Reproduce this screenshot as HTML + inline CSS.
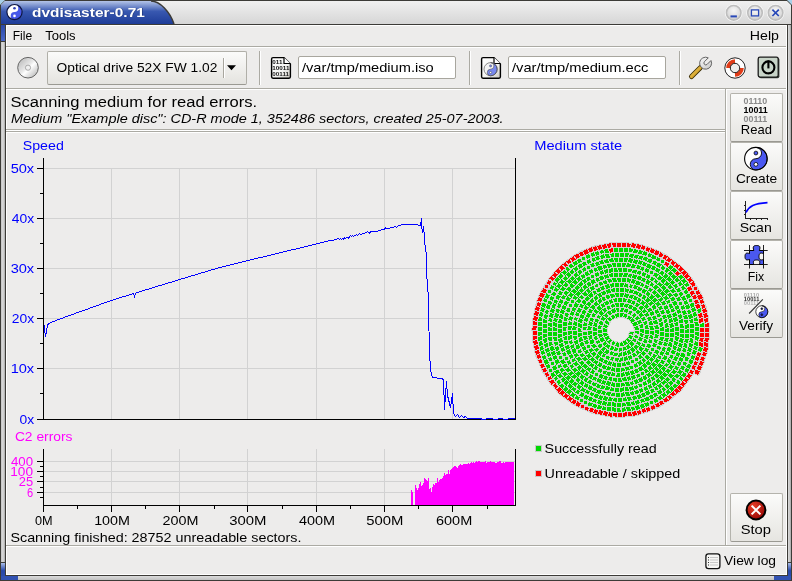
<!DOCTYPE html>
<html><head><meta charset="utf-8"><style>
*{margin:0;padding:0;box-sizing:border-box}
html,body{width:792px;height:581px;overflow:hidden;background:#a8d0e8}
body{font-family:"Liberation Sans",sans-serif;position:relative}
.a{position:absolute}
.t{position:absolute;white-space:nowrap;line-height:1}
.btn{position:absolute;border:1px solid #b0afa8;border-bottom-color:#9a9992;border-radius:2px;background:linear-gradient(180deg,#fbfbfa,#e4e3df)}
.sb{position:absolute;left:730px;width:53px;height:49px;border:1px solid #b4b3ac;border-bottom-color:#9a9992;border-radius:2px;background:linear-gradient(180deg,#fbfbfa,#e6e5e1)}
.sbl{position:absolute;left:0;width:51px;text-align:center;font-size:13px;line-height:1;color:#000}
</style></head><body>
<!-- window frame -->
<div class="a" style="left:0;top:0;width:792px;height:581px;background:#3c3b37;clip-path:polygon(5px 0,787px 0,792px 5px,792px 581px,0 581px,0 5px)"></div>
<div class="a" style="left:1px;top:25px;width:4px;height:555px;background:linear-gradient(90deg,#c4c4c4,#dcdcdc 50%,#a8a8a8)"></div>
<div class="a" style="left:788px;top:25px;width:3px;height:555px;background:linear-gradient(90deg,#dcdcdc,#c8c8c8 50%,#a8a8a8)"></div>
<div class="a" style="left:1px;top:576px;width:790px;height:4px;background:linear-gradient(180deg,#dcdcdc,#c0c0c0)"></div>
<div class="a" style="left:1px;top:25px;width:4px;height:16px;background:linear-gradient(180deg,#2a48a8,#4a68c8)"></div>
<div class="a" style="left:1px;top:41px;width:4px;height:1px;background:#3c3b37"></div>
<div class="a" style="left:1px;top:562px;width:4px;height:1px;background:#3c3b37"></div>
<div class="a" style="left:1px;top:563px;width:4px;height:17px;background:linear-gradient(180deg,#a8bce8,#2848a8 45%,#3050b0)"></div>
<div class="a" style="left:1px;top:576px;width:17px;height:4px;background:#3252b2"></div>
<div class="a" style="left:788px;top:562px;width:3px;height:1px;background:#3c3b37"></div>
<div class="a" style="left:788px;top:563px;width:3px;height:17px;background:linear-gradient(180deg,#a8bce8,#2848a8 45%,#3050b0)"></div>
<div class="a" style="left:774px;top:576px;width:17px;height:4px;background:#3252b2"></div>
<!-- title bar -->
<div class="a" style="left:1px;top:1px;width:790px;height:23px;background:linear-gradient(180deg,#f0f0f0,#d6d6d6);clip-path:polygon(4px 0,786px 0,790px 4px,790px 23px,0 23px,0 4px)"></div>
<svg class="a" style="left:0;top:0" width="200" height="25">
<defs><linearGradient id="tg" x1="0" y1="0" x2="0" y2="1"><stop offset="0" stop-color="#b4c4e8"/><stop offset="0.45" stop-color="#3858b0"/><stop offset="1" stop-color="#1e3c98"/></linearGradient>
<radialGradient id="yy"><stop offset="0" stop-color="#5060f0"/><stop offset="1" stop-color="#3040d8"/></radialGradient></defs>
<path d="M1,24 L1,5 L5,1 L151,1 C160,1 170,12 174,24 Z" fill="url(#tg)"/>
<path d="M151,1 C160,1 170,12 174,24" fill="none" stroke="#3c3b37" stroke-width="1.5"/>
<g transform="translate(14.5,12.1)">
<circle r="7.6" fill="#fff"/>
<path d="M0,-7.6 A7.6,7.6 0 0 1 0,7.6 A3.8,3.8 0 0 1 0,0 A3.8,3.8 0 0 0 0,-7.6Z" fill="#4658e8"/>
<circle r="7.6" fill="none" stroke="#0c1440" stroke-width="1.2"/>
<circle cy="-3.8" r="1.3" fill="#3040b0"/><circle cy="3.8" r="1.3" fill="#fff"/>
</g>
</svg>
<div class="a" style="left:1px;top:24px;width:790px;height:1px;background:#3c3b37"></div>
<!-- wm buttons -->
<svg class="a" style="left:720px;top:2px" width="70" height="22">
<defs><radialGradient id="wb" cx="0.5" cy="0.35" r="0.65"><stop offset="0" stop-color="#f6f6f6"/><stop offset="0.75" stop-color="#dadada"/><stop offset="1" stop-color="#c4c4c4"/></radialGradient></defs>
<g transform="translate(13.7,10.8)"><circle r="8.8" fill="#fafafa"/><circle r="7.3" fill="url(#wb)" stroke="#bdbdbd" stroke-width="1.6"/><rect x="-3.2" y="2.6" width="6.4" height="2" fill="#2848b8"/></g>
<g transform="translate(35,10.8)"><circle r="8.8" fill="#fafafa"/><circle r="7.3" fill="url(#wb)" stroke="#bdbdbd" stroke-width="1.6"/><rect x="-3.6" y="-2.9" width="7.2" height="6" fill="none" stroke="#2848b8" stroke-width="1.3"/></g>
<g transform="translate(55.6,10.8)"><circle r="8.8" fill="#fafafa"/><circle r="7.3" fill="url(#wb)" stroke="#bdbdbd" stroke-width="1.6"/><path d="M-3.2,-3.2L3.2,3.2M3.2,-3.2L-3.2,3.2" stroke="#2848b8" stroke-width="1.7"/></g>
</svg>
<!-- content -->
<div class="a" style="left:6px;top:25px;width:781px;height:550px;background:#edeceb;border:1px solid #fff"></div>
<!-- menu -->
<div class="a" style="left:6px;top:46px;width:780px;height:1px;background:#abaaa3"></div><div class="a" style="left:6px;top:47px;width:780px;height:1px;background:#fff"></div>
<div class="a" style="left:6px;top:88px;width:780px;height:1px;background:#abaaa3"></div><div class="a" style="left:6px;top:89px;width:780px;height:1px;background:#fff"></div>
<!-- toolbar -->
<svg class="a" style="left:16px;top:56px" width="24" height="24">
<defs><linearGradient id="cd" x1="0" y1="0" x2="1" y2="1"><stop offset="0" stop-color="#b0b0b0"/><stop offset="0.45" stop-color="#e8e8e8"/><stop offset="0.55" stop-color="#ffffff"/><stop offset="1" stop-color="#a8a8a8"/></linearGradient></defs>
<circle cx="12" cy="11.7" r="10.3" fill="url(#cd)" stroke="#666" stroke-width="1"/>
<circle cx="12" cy="11.7" r="2.6" fill="#f0f0f0" stroke="#999" stroke-width="0.8"/>
</svg>
<div class="btn" style="left:47px;top:51px;width:200px;height:34px"></div>
<div class="a" style="left:223px;top:58px;width:1px;height:20px;background:#a8a69e"></div><div class="a" style="left:224px;top:58px;width:1px;height:20px;background:#fff"></div>
<svg class="a" style="left:226px;top:64px" width="12" height="8"><path d="M1,1.2 L10,1.2 L5.5,6.2Z" fill="#000"/></svg>
<div class="a" style="left:259px;top:51px;width:1px;height:34px;background:#abaaa3"></div><div class="a" style="left:260px;top:51px;width:1px;height:34px;background:#fff"></div>
<svg class="a" style="left:0;top:0;will-change:transform" width="520" height="90">
<defs><linearGradient id="fg" x1="0" y1="0" x2="1" y2="1"><stop offset="0" stop-color="#ffffff"/><stop offset="0.6" stop-color="#f4f4f2"/><stop offset="1" stop-color="#c8c4bc"/></linearGradient></defs>
<path d="M273,57.6 L284,57.6 L290.4,64 L290.4,76.8 Q290.4,78.2 289,78.2 L273,78.2 Q271.6,78.2 271.6,76.8 L271.6,59 Q271.6,57.6 273,57.6Z" fill="url(#fg)" stroke="#000" stroke-width="1.4"/>
<path d="M284,57.6 L284,63.5 L290.4,63.5" fill="#fff" stroke="#000" stroke-width="1.2"/>
<text transform="translate(272.3,63.6) scale(1.05,1)" font-family="Liberation Sans" font-size="6" font-weight="bold" fill="#111">011</text>
<text transform="translate(272.3,70.1) scale(1.05,1)" font-family="Liberation Sans" font-size="6" font-weight="bold" fill="#111">10011</text>
<text transform="translate(272.3,76.4) scale(1.05,1)" font-family="Liberation Sans" font-size="6" font-weight="bold" fill="#222">00111</text>
<path d="M483,57.6 L494,57.6 L500.4,64 L500.4,76.8 Q500.4,78.2 499,78.2 L483,78.2 Q481.6,78.2 481.6,76.8 L481.6,59 Q481.6,57.6 483,57.6Z" fill="url(#fg)" stroke="#000" stroke-width="1.4"/>
<path d="M494,57.6 L494,63.5 L500.4,63.5" fill="#fff" stroke="#000" stroke-width="1.2"/>
<g transform="translate(490.6,69.2)">
<circle r="6.6" fill="#f4f4f4"/>
<path d="M0,-6.6 A6.6,6.6 0 0 1 0,6.6 A3.3,3.3 0 0 1 0,0 A3.3,3.3 0 0 0 0,-6.6Z" fill="#7888ee" stroke="#333" stroke-width="0.5"/>
<circle r="6.6" fill="none" stroke="#444" stroke-width="0.6"/>
<circle cy="-3.3" r="1.1" fill="#7888ee" stroke="#333" stroke-width="0.4"/><circle cy="3.3" r="1.1" fill="#f4f4f4" stroke="#333" stroke-width="0.4"/>
</g>
</svg>
<div class="a" style="left:298px;top:56px;width:158px;height:23px;background:#fff;border:1px solid #a8a69e;border-radius:2px"></div>
<div class="a" style="left:469px;top:51px;width:1px;height:34px;background:#abaaa3"></div><div class="a" style="left:470px;top:51px;width:1px;height:34px;background:#fff"></div>
<div class="a" style="left:508px;top:56px;width:158px;height:23px;background:#fff;border:1px solid #a8a69e;border-radius:2px"></div>
<div class="a" style="left:679px;top:51px;width:1px;height:34px;background:#abaaa3"></div><div class="a" style="left:680px;top:51px;width:1px;height:34px;background:#fff"></div>
<svg class="a" style="left:0;top:0" width="792" height="90">
<defs><linearGradient id="hd" x1="0" y1="0" x2="1" y2="1"><stop offset="0" stop-color="#f8f8f8"/><stop offset="1" stop-color="#c8c8c8"/></linearGradient>
<linearGradient id="hg" x1="0" y1="0" x2="1" y2="1"><stop offset="0" stop-color="#f0cc60"/><stop offset="1" stop-color="#c89010"/></linearGradient></defs>
<path d="M691.5,76.5 L700.3,67.7" stroke="#3a2c00" stroke-width="5" stroke-linecap="round"/>
<path d="M691.5,76.5 L700.3,67.7" stroke="url(#hg)" stroke-width="3.2" stroke-linecap="round"/>
<path d="M710.97,60.52 L707.16,64.33 A1.9,1.9 0 0 1 704.47,61.64 L708.28,57.83 A6.0,6.0 0 1 0 710.97,60.52 Z" fill="url(#hd)" stroke="#555" stroke-width="0.9"/>
<circle cx="735" cy="68" r="10.2" fill="#fff" stroke="#222" stroke-width="1"/>
<path d="M735,59.2 A8.8,8.8 0 0 0 726.2,68 L730.4,68 A4.6,4.6 0 0 1 735,63.4Z" fill="#e03c18"/>
<path d="M735,76.8 A8.8,8.8 0 0 0 743.8,68 L739.6,68 A4.6,4.6 0 0 1 735,72.6Z" fill="#e03c18"/>
<circle cx="735" cy="68" r="4.7" fill="#ededeb" stroke="#222" stroke-width="1"/>
<rect x="759" y="57.8" width="20.4" height="20.4" rx="1.8" fill="#384038"/>
<rect x="758.2" y="57.1" width="20" height="20" rx="1.8" fill="#c8d4c8" stroke="#1a1a1a" stroke-width="1.3"/>
<circle cx="768.4" cy="67.4" r="6" fill="none" stroke="#000" stroke-width="2.1"/>
<path d="M768.4,60.4 V68.4" stroke="#000" stroke-width="2.1"/>
</svg>
<!-- header -->
<div class="a" style="left:6px;top:129px;width:719px;height:1px;background:#abaaa3"></div><div class="a" style="left:6px;top:130px;width:719px;height:1px;background:#fff"></div>
<div class="a" style="left:6px;top:131px;width:719px;height:1px;background:#abaaa3"></div><div class="a" style="left:6px;top:132px;width:719px;height:1px;background:#fff"></div>
<div class="a" style="left:725px;top:89px;width:1px;height:456px;background:#abaaa3"></div><div class="a" style="left:726px;top:89px;width:1px;height:456px;background:#fff"></div>
<div class="a" style="left:6px;top:545px;width:780px;height:1px;background:#abaaa3"></div><div class="a" style="left:6px;top:546px;width:780px;height:1px;background:#fff"></div>
<!-- charts -->
<svg class="a" style="left:0;top:0" width="530" height="530"><rect x="44" y="368" width="471" height="1" fill="#d2d2d2"/><rect x="44" y="318" width="471" height="1" fill="#d2d2d2"/><rect x="44" y="268" width="471" height="1" fill="#d2d2d2"/><rect x="44" y="218" width="471" height="1" fill="#d2d2d2"/><rect x="44" y="168" width="471" height="1" fill="#d2d2d2"/><rect x="111" y="168" width="1" height="251" fill="#d2d2d2"/><rect x="179" y="168" width="1" height="251" fill="#d2d2d2"/><rect x="247" y="168" width="1" height="251" fill="#d2d2d2"/><rect x="316" y="168" width="1" height="251" fill="#d2d2d2"/><rect x="384" y="168" width="1" height="251" fill="#d2d2d2"/><rect x="452" y="168" width="1" height="251" fill="#d2d2d2"/><rect x="43" y="158" width="1" height="262" fill="#000"/><rect x="515" y="158" width="1" height="262" fill="#000"/><rect x="37" y="419" width="479" height="1" fill="#000"/><rect x="37" y="419" width="6" height="1" fill="#000"/><rect x="40" y="393" width="3" height="1" fill="#000"/><rect x="37" y="368" width="6" height="1" fill="#000"/><rect x="40" y="343" width="3" height="1" fill="#000"/><rect x="37" y="318" width="6" height="1" fill="#000"/><rect x="40" y="293" width="3" height="1" fill="#000"/><rect x="37" y="268" width="6" height="1" fill="#000"/><rect x="40" y="243" width="3" height="1" fill="#000"/><rect x="37" y="218" width="6" height="1" fill="#000"/><rect x="40" y="193" width="3" height="1" fill="#000"/><rect x="37" y="168" width="6" height="1" fill="#000"/><path d="M44.5 324.5 L44.5 329.5 L45.5 336.5 L46.5 331.5 L47.5 325.5 L48.5 323.5 L49.5 323.5 L50.5 322.5 L51.5 322.5 L52.5 321.5 L53.5 321.5 L54.5 321.5 L55.5 320.5 L56.5 320.5 L57.5 319.5 L58.5 319.5 L59.5 319.5 L60.5 318.5 L61.5 318.5 L62.5 318.5 L63.5 317.5 L64.5 317.5 L65.5 316.5 L66.5 316.5 L67.5 316.5 L68.5 315.5 L69.5 315.5 L70.5 315.5 L71.5 314.5 L72.5 314.5 L73.5 314.5 L74.5 313.5 L75.5 313.5 L76.5 312.5 L77.5 312.5 L78.5 312.5 L79.5 311.5 L80.5 311.5 L81.5 311.5 L82.5 310.5 L83.5 310.5 L84.5 310.5 L85.5 309.5 L86.5 309.5 L87.5 309.5 L88.5 308.5 L89.5 308.5 L90.5 307.5 L91.5 307.5 L92.5 307.5 L93.5 306.5 L94.5 306.5 L95.5 306.5 L96.5 305.5 L97.5 305.5 L98.5 305.5 L99.5 304.5 L100.5 304.5 L101.5 303.5 L102.5 303.5 L103.5 303.5 L104.5 302.5 L105.5 302.5 L106.5 302.5 L107.5 301.5 L108.5 301.5 L109.5 301.5 L110.5 300.5 L111.5 300.5 L112.5 300.5 L113.5 299.5 L114.5 299.5 L115.5 299.5 L116.5 298.5 L117.5 298.5 L118.5 298.5 L119.5 297.5 L120.5 297.5 L121.5 297.5 L122.5 296.5 L123.5 296.5 L124.5 296.5 L125.5 296.5 L126.5 295.5 L127.5 295.5 L128.5 295.5 L129.5 294.5 L130.5 294.5 L131.5 294.5 L132.5 293.5 L133.5 293.5 L134.5 296.5 L135.5 293.5 L136.5 292.5 L137.5 292.5 L138.5 292.5 L139.5 291.5 L140.5 291.5 L141.5 291.5 L142.5 290.5 L143.5 290.5 L144.5 290.5 L145.5 289.5 L146.5 289.5 L147.5 289.5 L148.5 289.5 L149.5 288.5 L150.5 288.5 L151.5 288.5 L152.5 287.5 L153.5 287.5 L154.5 287.5 L155.5 286.5 L156.5 286.5 L157.5 286.5 L158.5 285.5 L159.5 285.5 L160.5 285.5 L161.5 285.5 L162.5 284.5 L163.5 284.5 L164.5 284.5 L165.5 283.5 L166.5 283.5 L167.5 283.5 L168.5 282.5 L169.5 282.5 L170.5 282.5 L171.5 282.5 L172.5 281.5 L173.5 281.5 L174.5 281.5 L175.5 280.5 L176.5 280.5 L177.5 280.5 L178.5 279.5 L179.5 279.5 L180.5 279.5 L181.5 278.5 L182.5 278.5 L183.5 278.5 L184.5 278.5 L185.5 277.5 L186.5 277.5 L187.5 277.5 L188.5 276.5 L189.5 276.5 L190.5 276.5 L191.5 275.5 L192.5 275.5 L193.5 275.5 L194.5 275.5 L195.5 274.5 L196.5 274.5 L197.5 274.5 L198.5 273.5 L199.5 273.5 L200.5 273.5 L201.5 272.5 L202.5 272.5 L203.5 272.5 L204.5 272.5 L205.5 271.5 L206.5 271.5 L207.5 271.5 L208.5 270.5 L209.5 270.5 L210.5 270.5 L211.5 269.5 L212.5 269.5 L213.5 269.5 L214.5 269.5 L215.5 268.5 L216.5 268.5 L217.5 268.5 L218.5 267.5 L219.5 267.5 L220.5 267.5 L221.5 267.5 L222.5 266.5 L223.5 266.5 L224.5 266.5 L225.5 266.5 L226.5 265.5 L227.5 265.5 L228.5 265.5 L229.5 265.5 L230.5 264.5 L231.5 264.5 L232.5 264.5 L233.5 264.5 L234.5 263.5 L235.5 263.5 L236.5 263.5 L237.5 263.5 L238.5 262.5 L239.5 262.5 L240.5 262.5 L241.5 262.5 L242.5 261.5 L243.5 261.5 L244.5 261.5 L245.5 261.5 L246.5 260.5 L247.5 260.5 L248.5 260.5 L249.5 260.5 L250.5 259.5 L251.5 259.5 L252.5 259.5 L253.5 259.5 L254.5 258.5 L255.5 258.5 L256.5 258.5 L257.5 258.5 L258.5 257.5 L259.5 257.5 L260.5 257.5 L261.5 257.5 L262.5 257.5 L263.5 256.5 L264.5 256.5 L265.5 256.5 L266.5 256.5 L267.5 255.5 L268.5 255.5 L269.5 255.5 L270.5 255.5 L271.5 254.5 L272.5 254.5 L273.5 254.5 L274.5 254.5 L275.5 253.5 L276.5 253.5 L277.5 253.5 L278.5 253.5 L279.5 252.5 L280.5 252.5 L281.5 252.5 L282.5 252.5 L283.5 251.5 L284.5 251.5 L285.5 251.5 L286.5 251.5 L287.5 250.5 L288.5 250.5 L289.5 250.5 L290.5 250.5 L291.5 249.5 L292.5 249.5 L293.5 249.5 L294.5 249.5 L295.5 249.5 L296.5 248.5 L297.5 248.5 L298.5 248.5 L299.5 248.5 L300.5 247.5 L301.5 247.5 L302.5 247.5 L303.5 247.5 L304.5 246.5 L305.5 246.5 L306.5 246.5 L307.5 246.5 L308.5 245.5 L309.5 245.5 L310.5 245.5 L311.5 245.5 L312.5 244.5 L313.5 244.5 L314.5 244.5 L315.5 244.5 L316.5 243.5 L317.5 243.5 L318.5 243.5 L319.5 243.5 L320.5 242.5 L321.5 242.5 L322.5 242.5 L323.5 242.5 L324.5 241.5 L325.5 241.5 L326.5 241.5 L327.5 241.5 L328.5 240.5 L329.5 240.5 L330.5 240.5 L331.5 240.5 L332.5 240.5 L333.5 240.5 L334.5 239.5 L335.5 239.5 L336.5 239.5 L337.5 238.5 L338.5 238.5 L339.5 239.5 L340.5 238.5 L341.5 239.5 L342.5 238.5 L343.5 239.5 L344.5 237.5 L345.5 238.5 L346.5 237.5 L347.5 237.5 L348.5 238.5 L349.5 236.5 L350.5 235.5 L351.5 236.5 L352.5 235.5 L353.5 236.5 L354.5 235.5 L355.5 235.5 L356.5 234.5 L357.5 235.5 L358.5 234.5 L359.5 233.5 L360.5 234.5 L361.5 234.5 L362.5 233.5 L363.5 233.5 L364.5 233.5 L365.5 232.5 L366.5 232.5 L367.5 231.5 L368.5 232.5 L369.5 233.5 L370.5 231.5 L371.5 231.5 L372.5 231.5 L373.5 231.5 L374.5 231.5 L375.5 231.5 L376.5 231.5 L377.5 231.5 L378.5 230.5 L379.5 230.5 L380.5 230.5 L381.5 229.5 L382.5 229.5 L383.5 229.5 L384.5 229.5 L385.5 227.5 L386.5 228.5 L387.5 228.5 L388.5 228.5 L389.5 228.5 L390.5 227.5 L391.5 227.5 L392.5 227.5 L393.5 227.5 L394.5 226.5 L395.5 226.5 L396.5 227.5 L397.5 226.5 L398.5 225.5 L399.5 225.5 L400.5 225.5 L401.5 224.5 L402.5 224.5 L403.5 224.5 L404.5 224.5 L405.5 224.5 L406.5 224.5 L407.5 224.5 L408.5 224.5 L409.5 224.5 L410.5 224.5 L411.5 224.5 L412.5 224.5 L413.5 224.5 L414.5 224.5 L415.5 224.5 L416.5 224.5 L417.5 224.5 L418.5 225.5 L419.5 225.5 L420.5 225.5 L421.5 218.5 L421.5 224.5 L422.5 232.5 L423.5 226.5 L424.5 236.5 L424.5 241.5 L425.5 247.5 L426.5 256.5 L426.5 270.5 L427.5 286.5 L428.5 296.5 L428.5 310.5 L429.5 351.5 L430.5 370.5 L432.5 377.5 L441.5 378.5 L443.5 379.5 L444.5 409.5 L446.5 381.5 L447.5 395.5 L450.5 407.5 L452.5 393.5 L453.5 413.5 L455.5 416.5 L457.5 414.5 L459.5 417.5 L461.5 415.5 L463.5 417.5 L465.5 416.5 L467.5 418.5 L480.5 418.5 L482.5 419.5 L490.5 418.5 L495.5 419.5 L500.5 418.5 L505.5 419.5 L510.5 418.5 L514.5 418.5" fill="none" stroke="#0000ff" stroke-width="1" shape-rendering="crispEdges"/><rect x="44" y="461" width="471" height="1" fill="#d2d2d2"/><rect x="44" y="471" width="471" height="1" fill="#d2d2d2"/><rect x="44" y="481" width="471" height="1" fill="#d2d2d2"/><rect x="44" y="492" width="471" height="1" fill="#d2d2d2"/><rect x="111" y="449" width="1" height="56" fill="#d2d2d2"/><rect x="179" y="449" width="1" height="56" fill="#d2d2d2"/><rect x="247" y="449" width="1" height="56" fill="#d2d2d2"/><rect x="316" y="449" width="1" height="56" fill="#d2d2d2"/><rect x="384" y="449" width="1" height="56" fill="#d2d2d2"/><rect x="452" y="449" width="1" height="56" fill="#d2d2d2"/><path d="M411 490H412V505H411ZM412 492H413V505H412ZM415 485H416V505H415ZM416 488H417V505H416ZM417 490H418V505H417ZM418 488H419V505H418ZM419 484H420V505H419ZM420 482H421V505H420ZM421 486H422V505H421ZM422 485H423V505H422ZM423 483H424V505H423ZM424 478H425V505H424ZM425 479H426V505H425ZM426 480H427V505H426ZM427 481H428V505H427ZM428 478H429V505H428ZM429 489H430V505H429ZM430 488H431V505H430ZM431 492H432V505H431ZM432 487H433V505H432ZM433 484H434V505H433ZM434 485H435V505H434ZM435 483H436V505H435ZM436 483H437V505H436ZM437 478H438V505H437ZM438 482H439V505H438ZM439 480H440V505H439ZM440 479H441V505H440ZM441 479H442V505H441ZM442 478H443V505H442ZM443 476H444V505H443ZM444 473H445V505H444ZM445 475H446V505H445ZM446 474H447V505H446ZM447 474H448V505H447ZM448 470H449V505H448ZM449 474H450V505H449ZM450 470H451V505H450ZM451 469H452V505H451ZM452 468H453V505H452ZM453 467H454V505H453ZM454 466H455V505H454ZM455 466H456V505H455ZM456 467H457V505H456ZM457 468H458V505H457ZM458 466H459V505H458ZM459 465H460V505H459ZM460 464H461V505H460ZM461 465H462V505H461ZM462 465H463V505H462ZM463 464H464V505H463ZM464 464H465V505H464ZM465 464H466V505H465ZM466 464H467V505H466ZM467 464H468V505H467ZM468 463H469V505H468ZM469 464H470V505H469ZM470 463H471V505H470ZM471 462H472V505H471ZM472 463H473V505H472ZM473 462H474V505H473ZM474 463H475V505H474ZM475 462H476V505H475ZM476 461H477V505H476ZM477 462H478V505H477ZM478 461H479V505H478ZM479 461H480V505H479ZM480 462H481V505H480ZM481 462H482V505H481ZM482 462H483V505H482ZM483 462H484V505H483ZM484 462H485V505H484ZM485 461H486V505H485ZM486 463H487V505H486ZM487 462H488V505H487ZM488 462H489V505H488ZM489 462H490V505H489ZM490 461H491V505H490ZM491 462H492V505H491ZM492 462H493V505H492ZM493 462H494V505H493ZM494 462H495V505H494ZM495 463H496V505H495ZM496 463H497V505H496ZM497 462H498V505H497ZM498 462H499V505H498ZM499 461H500V505H499ZM500 461H501V505H500ZM501 463H502V505H501ZM502 463H503V505H502ZM503 462H504V505H503ZM504 463H505V505H504ZM505 462H506V505H505ZM506 462H507V505H506ZM507 462H508V505H507ZM508 462H509V505H508ZM509 462H510V505H509ZM510 462H511V505H510ZM511 462H512V505H511ZM512 462H513V505H512ZM513 462H514V505H513Z" fill="#ff00ff"/><rect x="43" y="449" width="1" height="63" fill="#000"/><rect x="515" y="449" width="1" height="57" fill="#000"/><rect x="44" y="505" width="472" height="1" fill="#000"/><rect x="37" y="461" width="6" height="1" fill="#000"/><rect x="37" y="471" width="6" height="1" fill="#000"/><rect x="37" y="481" width="6" height="1" fill="#000"/><rect x="37" y="492" width="6" height="1" fill="#000"/><rect x="40" y="466" width="3" height="1" fill="#000"/><rect x="40" y="476" width="3" height="1" fill="#000"/><rect x="40" y="487" width="3" height="1" fill="#000"/><rect x="40" y="497" width="3" height="1" fill="#000"/><rect x="43" y="506" width="1" height="6" fill="#000"/><rect x="111" y="506" width="1" height="6" fill="#000"/><rect x="179" y="506" width="1" height="6" fill="#000"/><rect x="247" y="506" width="1" height="6" fill="#000"/><rect x="316" y="506" width="1" height="6" fill="#000"/><rect x="384" y="506" width="1" height="6" fill="#000"/><rect x="452" y="506" width="1" height="6" fill="#000"/><rect x="77" y="506" width="1" height="3" fill="#000"/><rect x="145" y="506" width="1" height="3" fill="#000"/><rect x="214" y="506" width="1" height="3" fill="#000"/><rect x="282" y="506" width="1" height="3" fill="#000"/><rect x="350" y="506" width="1" height="3" fill="#000"/><rect x="418" y="506" width="1" height="3" fill="#000"/><rect x="487" y="506" width="1" height="3" fill="#000"/></svg>
<svg class="a" style="left:520px;top:230px" width="200" height="200">
<path d="M109.5 101.5L114.5 101.5L113.5 105.5L108.5 104.5ZM109.5 104.5L113.5 105.5L111.5 110.5L107.5 107.5ZM107.5 107.5L111.5 110.5L108.5 113.5L105.5 109.5ZM105.5 109.5L108.5 113.5L104.5 116.5L102.5 111.5ZM102.5 111.5L104.5 116.5L99.5 117.5L99.5 112.5ZM99.5 112.5L99.5 117.5L94.5 116.5L96.5 111.5ZM95.5 111.5L94.5 116.5L90.5 114.5L92.5 110.5ZM92.5 110.5L89.5 114.5L86.5 111.5L90.5 108.5ZM90.5 108.5L86.5 111.5L83.5 107.5L88.5 105.5ZM88.5 105.5L83.5 107.5L82.5 102.5L87.5 102.5ZM87.5 102.5L82.5 102.5L82.5 97.5L87.5 98.5ZM87.5 98.5L82.5 97.5L83.5 93.5L88.5 95.5ZM88.5 95.5L83.5 92.5L86.5 88.5L90.5 92.5ZM89.5 92.5L86.5 88.5L89.5 85.5L92.5 89.5ZM92.5 89.5L89.5 85.5L94.5 83.5L95.5 88.5ZM95.5 88.5L94.5 83.5L99.5 82.5L99.5 87.5ZM99.5 87.5L99.5 82.5L104.5 82.5L102.5 87.5ZM102.5 87.5L104.5 82.5L108.5 84.5L106.5 88.5ZM106.5 88.5L108.5 84.5L112.5 87.5L109.5 90.5ZM109.5 90.5L112.5 87.5L116.5 90.5L111.5 93.5ZM111.5 93.5L116.5 90.5L118.5 95.5L113.5 96.5ZM113.5 96.5L118.5 95.5L119.5 100.5L114.5 100.5ZM114.5 100.5L119.5 100.5L119.5 104.5L114.5 103.5ZM114.5 104.5L119.5 105.5L117.5 109.5L113.5 107.5ZM113.5 107.5L117.5 109.5L115.5 113.5L111.5 110.5ZM111.5 110.5L115.5 114.5L111.5 117.5L108.5 113.5ZM108.5 113.5L111.5 117.5L107.5 120.5L105.5 115.5ZM105.5 115.5L107.5 120.5L102.5 121.5L102.5 116.5ZM102.5 116.5L102.5 121.5L98.5 122.5L98.5 117.5ZM98.5 117.5L97.5 122.5L93.5 121.5L94.5 116.5ZM94.5 116.5L93.5 121.5L88.5 119.5L91.5 115.5ZM91.5 115.5L88.5 119.5L84.5 116.5L87.5 113.5ZM87.5 113.5L84.5 116.5L81.5 113.5L85.5 110.5ZM85.5 110.5L81.5 113.5L78.5 108.5L83.5 106.5ZM83.5 106.5L78.5 108.5L77.5 103.5L82.5 103.5ZM82.5 103.5L77.5 103.5L77.5 99.5L82.5 99.5ZM81.5 99.5L77.5 99.5L77.5 94.5L82.5 95.5ZM82.5 95.5L77.5 94.5L79.5 89.5L84.5 92.5ZM84.5 91.5L79.5 89.5L82.5 85.5L86.5 88.5ZM86.5 88.5L82.5 85.5L86.5 82.5L89.5 86.5ZM88.5 86.5L86.5 81.5L90.5 79.5L92.5 84.5ZM92.5 84.5L90.5 79.5L95.5 77.5L96.5 82.5ZM96.5 82.5L95.5 77.5L99.5 77.5L99.5 82.5ZM99.5 82.5L100.5 77.5L104.5 77.5L103.5 82.5ZM103.5 82.5L104.5 77.5L109.5 79.5L107.5 83.5ZM107.5 83.5L109.5 79.5L113.5 81.5L110.5 85.5ZM111.5 85.5L114.5 81.5L117.5 84.5L113.5 88.5ZM114.5 88.5L117.5 84.5L120.5 88.5L116.5 91.5ZM116.5 91.5L120.5 88.5L122.5 93.5L118.5 94.5ZM118.5 94.5L123.5 93.5L124.5 98.5L119.5 98.5ZM119.5 98.5L124.5 98.5L124.5 103.5L119.5 102.5ZM119.5 102.5L124.5 103.5L123.5 107.5L118.5 106.5ZM118.5 106.5L123.5 107.5L121.5 112.5L117.5 110.5ZM117.5 110.5L122.5 112.5L119.5 116.5L115.5 113.5ZM115.5 113.5L119.5 116.5L116.5 120.5L112.5 116.5ZM112.5 116.5L116.5 120.5L112.5 123.5L109.5 119.5ZM109.5 119.5L112.5 123.5L107.5 125.5L106.5 120.5ZM106.5 120.5L107.5 125.5L102.5 126.5L102.5 121.5ZM102.5 121.5L102.5 126.5L97.5 127.5L98.5 122.5ZM98.5 122.5L97.5 127.5L92.5 126.5L94.5 121.5ZM94.5 121.5L92.5 126.5L88.5 124.5L90.5 120.5ZM90.5 120.5L88.5 125.5L83.5 122.5L86.5 118.5ZM86.5 118.5L83.5 122.5L80.5 119.5L83.5 115.5ZM83.5 116.5L79.5 119.5L76.5 115.5L81.5 112.5ZM80.5 112.5L76.5 115.5L74.5 111.5L79.5 109.5ZM78.5 109.5L74.5 111.5L72.5 106.5L77.5 105.5ZM77.5 105.5L72.5 106.5L72.5 101.5L77.5 101.5ZM77.5 101.5L72.5 101.5L72.5 96.5L77.5 97.5ZM77.5 97.5L72.5 96.5L73.5 91.5L78.5 93.5ZM78.5 93.5L73.5 91.5L75.5 87.5L79.5 89.5ZM79.5 89.5L75.5 87.5L78.5 83.5L81.5 86.5ZM81.5 86.5L77.5 83.5L81.5 79.5L84.5 83.5ZM84.5 83.5L81.5 79.5L85.5 76.5L87.5 80.5ZM87.5 80.5L85.5 76.5L89.5 74.5L91.5 79.5ZM91.5 78.5L89.5 74.5L94.5 72.5L95.5 77.5ZM95.5 77.5L94.5 72.5L99.5 72.5L99.5 77.5ZM99.5 77.5L99.5 72.5L104.5 72.5L103.5 77.5ZM103.5 77.5L104.5 72.5L109.5 73.5L107.5 78.5ZM107.5 78.5L109.5 73.5L113.5 75.5L111.5 80.5ZM111.5 80.5L113.5 75.5L118.5 78.5L114.5 82.5ZM114.5 82.5L118.5 78.5L121.5 81.5L117.5 85.5ZM117.5 85.5L121.5 81.5L124.5 85.5L120.5 88.5ZM120.5 88.5L124.5 85.5L126.5 90.5L122.5 91.5ZM122.5 91.5L127.5 90.5L128.5 94.5L123.5 95.5ZM123.5 95.5L128.5 94.5L129.5 99.5L124.5 99.5ZM124.5 99.5L129.5 99.5L129.5 104.5L124.5 104.5ZM124.5 104.5L129.5 104.5L128.5 109.5L123.5 108.5ZM123.5 108.5L128.5 109.5L126.5 114.5L122.5 112.5ZM122.5 112.5L126.5 114.5L124.5 118.5L120.5 115.5ZM120.5 115.5L124.5 118.5L121.5 122.5L117.5 118.5ZM117.5 119.5L121.5 122.5L117.5 125.5L114.5 121.5ZM114.5 121.5L117.5 125.5L113.5 128.5L111.5 124.5ZM111.5 124.5L113.5 128.5L108.5 130.5L107.5 125.5ZM107.5 125.5L108.5 130.5L103.5 131.5L103.5 126.5ZM103.5 126.5L103.5 131.5L98.5 132.5L99.5 127.5ZM99.5 127.5L98.5 132.5L94.5 131.5L94.5 126.5ZM94.5 126.5L93.5 131.5L89.5 130.5L90.5 125.5ZM90.5 126.5L89.5 130.5L84.5 128.5L86.5 124.5ZM86.5 124.5L84.5 128.5L80.5 126.5L83.5 122.5ZM83.5 122.5L80.5 126.5L76.5 122.5L80.5 119.5ZM80.5 119.5L76.5 123.5L73.5 119.5L77.5 116.5ZM77.5 116.5L73.5 119.5L70.5 115.5L75.5 112.5ZM75.5 112.5L70.5 115.5L68.5 110.5L73.5 108.5ZM73.5 108.5L68.5 110.5L67.5 105.5L72.5 104.5ZM72.5 104.5L67.5 105.5L67.5 100.5L72.5 100.5ZM71.5 100.5L66.5 100.5L67.5 95.5L72.5 96.5ZM72.5 96.5L67.5 95.5L68.5 90.5L73.5 92.5ZM73.5 92.5L68.5 90.5L70.5 86.5L74.5 88.5ZM74.5 88.5L70.5 86.5L72.5 81.5L76.5 84.5ZM76.5 84.5L72.5 81.5L75.5 78.5L79.5 81.5ZM79.5 81.5L75.5 77.5L79.5 74.5L82.5 78.5ZM82.5 78.5L79.5 74.5L83.5 71.5L85.5 76.5ZM85.5 76.5L83.5 71.5L88.5 69.5L89.5 74.5ZM89.5 74.5L88.5 69.5L92.5 68.5L93.5 73.5ZM93.5 72.5L92.5 68.5L97.5 67.5L97.5 72.5ZM97.5 72.5L97.5 67.5L102.5 67.5L102.5 72.5ZM102.5 72.5L102.5 67.5L107.5 68.5L106.5 73.5ZM106.5 72.5L107.5 68.5L112.5 69.5L110.5 74.5ZM110.5 74.5L112.5 69.5L116.5 71.5L114.5 75.5ZM114.5 75.5L116.5 71.5L120.5 74.5L117.5 78.5ZM117.5 78.5L121.5 74.5L124.5 77.5L121.5 81.5ZM121.5 81.5L124.5 77.5L127.5 81.5L123.5 84.5ZM123.5 84.5L127.5 81.5L130.5 85.5L126.5 87.5ZM126.5 87.5L130.5 85.5L132.5 90.5L127.5 91.5ZM127.5 91.5L132.5 90.5L133.5 95.5L128.5 95.5ZM128.5 95.5L133.5 95.5L134.5 100.5L129.5 100.5ZM129.5 100.5L134.5 100.5L134.5 105.5L129.5 104.5ZM129.5 104.5L134.5 105.5L133.5 109.5L128.5 108.5ZM128.5 108.5L133.5 110.5L131.5 114.5L127.5 112.5ZM127.5 112.5L132.5 114.5L129.5 119.5L125.5 116.5ZM125.5 116.5L129.5 119.5L127.5 123.5L123.5 120.5ZM123.5 120.5L127.5 123.5L123.5 127.5L120.5 123.5ZM120.5 123.5L123.5 127.5L119.5 130.5L117.5 126.5ZM117.5 126.5L119.5 130.5L115.5 132.5L113.5 128.5ZM113.5 128.5L115.5 132.5L111.5 134.5L109.5 130.5ZM109.5 130.5L111.5 135.5L106.5 136.5L105.5 131.5ZM105.5 131.5L106.5 136.5L101.5 137.5L101.5 132.5ZM101.5 132.5L101.5 137.5L96.5 137.5L96.5 132.5ZM96.5 132.5L96.5 137.5L91.5 136.5L92.5 131.5ZM92.5 131.5L91.5 136.5L86.5 135.5L88.5 130.5ZM88.5 130.5L86.5 135.5L82.5 133.5L84.5 128.5ZM84.5 128.5L82.5 133.5L77.5 130.5L80.5 126.5ZM80.5 126.5L77.5 130.5L74.5 127.5L77.5 123.5ZM77.5 123.5L73.5 127.5L70.5 123.5L74.5 120.5ZM74.5 120.5L70.5 123.5L67.5 119.5L72.5 117.5ZM71.5 117.5L67.5 119.5L65.5 115.5L69.5 113.5ZM69.5 113.5L65.5 115.5L63.5 110.5L68.5 109.5ZM68.5 109.5L63.5 110.5L62.5 105.5L67.5 105.5ZM67.5 105.5L62.5 105.5L62.5 101.5L67.5 101.5ZM66.5 100.5L61.5 100.5L62.5 96.5L67.5 96.5ZM67.5 96.5L62.5 96.5L63.5 91.5L68.5 92.5ZM67.5 92.5L63.5 91.5L64.5 86.5L69.5 88.5ZM69.5 88.5L64.5 86.5L66.5 81.5L71.5 84.5ZM71.5 84.5L66.5 81.5L69.5 77.5L73.5 80.5ZM73.5 80.5L69.5 77.5L72.5 73.5L76.5 77.5ZM76.5 77.5L72.5 73.5L76.5 70.5L79.5 74.5ZM79.5 74.5L76.5 70.5L80.5 67.5L83.5 72.5ZM83.5 72.5L80.5 67.5L85.5 65.5L86.5 70.5ZM86.5 70.5L84.5 65.5L89.5 63.5L90.5 68.5ZM90.5 68.5L89.5 63.5L94.5 62.5L95.5 67.5ZM95.5 67.5L94.5 62.5L99.5 62.5L99.5 67.5ZM99.5 67.5L99.5 62.5L104.5 62.5L103.5 67.5ZM103.5 67.5L104.5 62.5L109.5 63.5L108.5 68.5ZM108.5 68.5L109.5 63.5L114.5 64.5L112.5 69.5ZM112.5 69.5L114.5 64.5L118.5 66.5L116.5 71.5ZM116.5 71.5L118.5 66.5L122.5 69.5L119.5 73.5ZM119.5 73.5L122.5 69.5L126.5 72.5L123.5 76.5ZM123.5 76.5L126.5 72.5L130.5 76.5L126.5 79.5ZM126.5 79.5L130.5 76.5L133.5 80.5L128.5 82.5ZM128.5 82.5L133.5 80.5L135.5 84.5L130.5 86.5ZM131.5 86.5L135.5 84.5L137.5 89.5L132.5 90.5ZM132.5 90.5L137.5 89.5L138.5 94.5L133.5 95.5ZM133.5 94.5L138.5 94.5L139.5 99.5L134.5 99.5ZM134.5 99.5L139.5 99.5L139.5 104.5L134.5 103.5ZM134.5 103.5L139.5 104.5L138.5 108.5L133.5 108.5ZM133.5 108.5L138.5 109.5L137.5 113.5L132.5 112.5ZM132.5 112.5L137.5 113.5L135.5 118.5L131.5 116.5ZM131.5 116.5L135.5 118.5L133.5 122.5L129.5 120.5ZM129.5 120.5L133.5 122.5L130.5 126.5L126.5 123.5ZM126.5 123.5L130.5 127.5L127.5 130.5L123.5 126.5ZM123.5 127.5L127.5 130.5L123.5 133.5L120.5 129.5ZM120.5 129.5L123.5 133.5L119.5 136.5L116.5 132.5ZM116.5 132.5L119.5 136.5L114.5 138.5L112.5 134.5ZM112.5 134.5L114.5 138.5L110.5 140.5L108.5 135.5ZM108.5 135.5L110.5 140.5L105.5 141.5L104.5 136.5ZM104.5 136.5L105.5 141.5L100.5 142.5L100.5 137.5ZM100.5 137.5L100.5 142.5L95.5 142.5L95.5 137.5ZM95.5 137.5L95.5 142.5L90.5 141.5L91.5 136.5ZM91.5 136.5L90.5 141.5L85.5 140.5L87.5 135.5ZM87.5 135.5L85.5 140.5L80.5 138.5L83.5 133.5ZM83.5 133.5L80.5 138.5L76.5 135.5L79.5 131.5ZM79.5 131.5L76.5 135.5L72.5 132.5L75.5 129.5ZM75.5 129.5L72.5 132.5L68.5 129.5L72.5 126.5ZM72.5 126.5L68.5 129.5L65.5 125.5L69.5 122.5ZM69.5 122.5L65.5 125.5L62.5 121.5L67.5 119.5ZM67.5 119.5L62.5 121.5L60.5 117.5L65.5 115.5ZM65.5 115.5L60.5 117.5L58.5 112.5L63.5 111.5ZM63.5 111.5L58.5 112.5L57.5 107.5L62.5 106.5ZM62.5 106.5L57.5 107.5L57.5 102.5L62.5 102.5ZM62.5 102.5L57.5 102.5L57.5 97.5L62.5 98.5ZM62.5 98.5L57.5 97.5L57.5 92.5L62.5 93.5ZM62.5 93.5L57.5 92.5L58.5 87.5L63.5 89.5ZM63.5 89.5L58.5 87.5L60.5 83.5L65.5 85.5ZM65.5 85.5L60.5 83.5L62.5 78.5L67.5 81.5ZM67.5 81.5L62.5 78.5L65.5 74.5L69.5 77.5ZM69.5 77.5L65.5 74.5L68.5 70.5L72.5 74.5ZM72.5 74.5L68.5 70.5L72.5 67.5L75.5 71.5ZM75.5 71.5L72.5 67.5L76.5 64.5L79.5 68.5ZM79.5 68.5L76.5 64.5L80.5 61.5L82.5 66.5ZM82.5 66.5L80.5 61.5L85.5 59.5L86.5 64.5ZM86.5 64.5L85.5 59.5L90.5 58.5L91.5 63.5ZM91.5 63.5L90.5 58.5L95.5 57.5L95.5 62.5ZM95.5 62.5L95.5 57.5L99.5 57.5L99.5 62.5ZM99.5 62.5L99.5 57.5L104.5 57.5L104.5 62.5ZM104.5 62.5L104.5 57.5L109.5 58.5L108.5 63.5ZM108.5 63.5L109.5 58.5L114.5 59.5L112.5 64.5ZM112.5 64.5L114.5 59.5L119.5 61.5L117.5 66.5ZM117.5 66.5L119.5 61.5L123.5 64.5L120.5 68.5ZM120.5 68.5L123.5 63.5L127.5 66.5L124.5 70.5ZM124.5 70.5L127.5 66.5L131.5 70.5L127.5 73.5ZM127.5 73.5L131.5 70.5L134.5 73.5L130.5 77.5ZM130.5 76.5L134.5 73.5L137.5 78.5L133.5 80.5ZM133.5 80.5L137.5 78.5L140.5 82.5L135.5 84.5ZM135.5 84.5L140.5 82.5L141.5 87.5L137.5 88.5ZM137.5 88.5L141.5 86.5L143.5 91.5L138.5 92.5ZM138.5 92.5L143.5 91.5L144.5 96.5L139.5 97.5ZM139.5 97.5L144.5 96.5L144.5 101.5L139.5 101.5ZM139.5 101.5L144.5 101.5L144.5 106.5L139.5 106.5ZM139.5 106.5L144.5 106.5L143.5 111.5L138.5 110.5ZM138.5 110.5L143.5 111.5L141.5 116.5L137.5 114.5ZM137.5 114.5L142.5 116.5L140.5 120.5L135.5 118.5ZM135.5 118.5L140.5 121.5L137.5 125.5L133.5 122.5ZM133.5 122.5L137.5 125.5L134.5 129.5L131.5 126.5ZM131.5 126.5L134.5 129.5L131.5 133.5L128.5 129.5ZM128.5 129.5L131.5 133.5L128.5 136.5L124.5 132.5ZM124.5 132.5L128.5 136.5L124.5 139.5L121.5 135.5ZM121.5 135.5L124.5 139.5L119.5 142.5L117.5 137.5ZM117.5 137.5L119.5 142.5L115.5 144.5L113.5 139.5ZM113.5 139.5L115.5 144.5L110.5 145.5L109.5 140.5ZM109.5 140.5L110.5 145.5L105.5 146.5L104.5 141.5ZM104.5 141.5L105.5 146.5L100.5 147.5L100.5 142.5ZM100.5 142.5L100.5 147.5L95.5 147.5L96.5 142.5ZM95.5 142.5L95.5 147.5L90.5 146.5L91.5 141.5ZM91.5 141.5L90.5 146.5L85.5 145.5L87.5 140.5ZM87.5 140.5L85.5 145.5L81.5 143.5L83.5 139.5ZM83.5 139.5L81.5 143.5L76.5 141.5L79.5 137.5ZM78.5 137.5L76.5 141.5L72.5 138.5L75.5 134.5ZM75.5 134.5L72.5 138.5L68.5 135.5L71.5 132.5ZM71.5 132.5L68.5 135.5L64.5 132.5L68.5 129.5ZM68.5 129.5L64.5 132.5L61.5 128.5L65.5 125.5ZM65.5 125.5L61.5 128.5L58.5 124.5L63.5 121.5ZM63.5 122.5L58.5 124.5L56.5 120.5L61.5 118.5ZM60.5 118.5L56.5 120.5L54.5 115.5L59.5 113.5ZM59.5 113.5L54.5 115.5L53.5 110.5L58.5 109.5ZM58.5 109.5L53.5 110.5L52.5 105.5L57.5 105.5ZM57.5 105.5L52.5 105.5L52.5 100.5L57.5 100.5ZM56.5 100.5L51.5 100.5L52.5 95.5L57.5 96.5ZM57.5 96.5L52.5 95.5L53.5 90.5L57.5 91.5ZM57.5 91.5L52.5 90.5L54.5 86.5L58.5 87.5ZM58.5 87.5L54.5 85.5L55.5 81.5L60.5 83.5ZM60.5 83.5L55.5 81.5L58.5 76.5L62.5 79.5ZM62.5 79.5L58.5 76.5L60.5 72.5L64.5 75.5ZM64.5 75.5L60.5 72.5L63.5 68.5L67.5 72.5ZM67.5 72.5L63.5 68.5L67.5 65.5L70.5 68.5ZM70.5 68.5L67.5 65.5L71.5 61.5L74.5 66.5ZM74.5 65.5L71.5 61.5L75.5 59.5L77.5 63.5ZM77.5 63.5L75.5 59.5L79.5 56.5L81.5 61.5ZM81.5 61.5L79.5 56.5L84.5 55.5L85.5 59.5ZM85.5 59.5L84.5 54.5L89.5 53.5L90.5 58.5ZM90.5 58.5L89.5 53.5L94.5 52.5L94.5 57.5ZM94.5 57.5L94.5 52.5L99.5 52.5L99.5 57.5ZM99.5 57.5L99.5 52.5L104.5 52.5L103.5 57.5ZM103.5 57.5L104.5 52.5L108.5 53.5L108.5 58.5ZM108.5 57.5L109.5 53.5L113.5 54.5L112.5 59.5ZM112.5 58.5L113.5 54.5L118.5 55.5L116.5 60.5ZM116.5 60.5L118.5 55.5L123.5 57.5L120.5 62.5ZM120.5 62.5L123.5 57.5L127.5 60.5L124.5 64.5ZM124.5 64.5L127.5 60.5L131.5 63.5L128.5 67.5ZM128.5 67.5L131.5 63.5L135.5 66.5L131.5 70.5ZM131.5 70.5L135.5 66.5L138.5 70.5L134.5 73.5ZM134.5 73.5L138.5 70.5L141.5 74.5L137.5 77.5ZM137.5 77.5L141.5 74.5L143.5 78.5L139.5 81.5ZM139.5 81.5L143.5 78.5L145.5 83.5L141.5 85.5ZM141.5 85.5L145.5 83.5L147.5 88.5L142.5 89.5ZM142.5 89.5L147.5 88.5L148.5 92.5L143.5 93.5ZM143.5 93.5L148.5 92.5L149.5 97.5L144.5 98.5ZM144.5 98.5L149.5 97.5L149.5 102.5L144.5 102.5ZM144.5 102.5L149.5 102.5L149.5 107.5L144.5 107.5ZM144.5 107.5L149.5 107.5L148.5 112.5L143.5 111.5ZM143.5 111.5L148.5 112.5L146.5 117.5L142.5 115.5ZM142.5 115.5L146.5 117.5L145.5 122.5L140.5 120.5ZM140.5 120.5L145.5 122.5L142.5 126.5L138.5 124.5ZM138.5 124.5L142.5 126.5L140.5 130.5L136.5 127.5ZM136.5 127.5L140.5 130.5L137.5 134.5L133.5 131.5ZM133.5 131.5L137.5 134.5L133.5 138.5L130.5 134.5ZM130.5 134.5L133.5 138.5L129.5 141.5L126.5 137.5ZM126.5 137.5L129.5 141.5L125.5 144.5L123.5 140.5ZM123.5 140.5L125.5 144.5L121.5 146.5L119.5 142.5ZM119.5 142.5L121.5 146.5L116.5 148.5L115.5 144.5ZM115.5 144.5L116.5 148.5L111.5 150.5L110.5 145.5ZM110.5 145.5L111.5 150.5L107.5 151.5L106.5 146.5ZM106.5 146.5L107.5 151.5L102.5 152.5L101.5 147.5ZM101.5 147.5L102.5 152.5L97.5 152.5L97.5 147.5ZM97.5 147.5L97.5 152.5L92.5 151.5L92.5 146.5ZM92.5 146.5L92.5 151.5L87.5 150.5L88.5 146.5ZM88.5 146.5L87.5 150.5L82.5 149.5L84.5 144.5ZM84.5 144.5L82.5 149.5L77.5 147.5L79.5 143.5ZM79.5 143.5L77.5 147.5L73.5 145.5L75.5 141.5ZM75.5 141.5L73.5 145.5L69.5 142.5L72.5 138.5ZM72.5 138.5L69.5 142.5L65.5 139.5L68.5 136.5ZM68.5 136.5L65.5 139.5L61.5 136.5L65.5 132.5ZM65.5 132.5L61.5 136.5L58.5 132.5L62.5 129.5ZM62.5 129.5L58.5 132.5L55.5 128.5L59.5 125.5ZM59.5 125.5L55.5 128.5L52.5 124.5L57.5 122.5ZM57.5 122.5L52.5 124.5L50.5 119.5L55.5 117.5ZM55.5 117.5L50.5 119.5L49.5 114.5L54.5 113.5ZM53.5 113.5L49.5 115.5L48.5 110.5L52.5 109.5ZM52.5 109.5L47.5 110.5L47.5 105.5L52.5 104.5ZM52.5 104.5L47.5 105.5L47.5 100.5L52.5 100.5ZM51.5 100.5L46.5 100.5L47.5 95.5L52.5 95.5ZM52.5 95.5L47.5 95.5L48.5 90.5L52.5 91.5ZM52.5 91.5L47.5 90.5L49.5 85.5L53.5 86.5ZM53.5 86.5L49.5 85.5L50.5 80.5L55.5 82.5ZM55.5 82.5L50.5 80.5L52.5 76.5L57.5 78.5ZM57.5 78.5L52.5 76.5L55.5 71.5L59.5 74.5ZM59.5 74.5L55.5 71.5L58.5 67.5L62.5 70.5ZM62.5 70.5L58.5 67.5L61.5 64.5L65.5 67.5ZM65.5 67.5L61.5 63.5L65.5 60.5L68.5 64.5ZM68.5 64.5L65.5 60.5L68.5 57.5L71.5 61.5ZM71.5 61.5L68.5 57.5L73.5 54.5L75.5 59.5ZM75.5 58.5L73.5 54.5L77.5 52.5L79.5 56.5ZM79.5 56.5L77.5 52.5L82.5 50.5L83.5 55.5ZM83.5 55.5L82.5 50.5L86.5 49.5L88.5 53.5ZM88.5 53.5L86.5 48.5L91.5 47.5L92.5 52.5ZM92.5 52.5L91.5 47.5L96.5 47.5L97.5 52.5ZM97.5 52.5L96.5 47.5L101.5 47.5L101.5 52.5ZM101.5 52.5L101.5 47.5L106.5 47.5L106.5 52.5ZM106.5 52.5L106.5 47.5L111.5 48.5L110.5 53.5ZM110.5 53.5L111.5 48.5L116.5 49.5L114.5 54.5ZM114.5 54.5L116.5 49.5L121.5 51.5L119.5 56.5ZM119.5 56.5L121.5 51.5L125.5 53.5L123.5 58.5ZM123.5 57.5L125.5 53.5L129.5 56.5L127.5 60.5ZM127.5 60.5L129.5 56.5L133.5 59.5L130.5 63.5ZM130.5 62.5L134.5 59.5L137.5 62.5L134.5 65.5ZM134.5 65.5L137.5 62.5L141.5 66.5L137.5 69.5ZM137.5 69.5L141.5 66.5L144.5 69.5L140.5 72.5ZM140.5 72.5L144.5 69.5L146.5 74.5L142.5 76.5ZM142.5 76.5L147.5 74.5L149.5 78.5L144.5 80.5ZM144.5 80.5L149.5 78.5L151.5 83.5L146.5 84.5ZM146.5 84.5L151.5 83.5L152.5 87.5L147.5 89.5ZM147.5 89.5L152.5 87.5L153.5 92.5L148.5 93.5ZM148.5 93.5L153.5 92.5L154.5 97.5L149.5 98.5ZM149.5 98.5L154.5 97.5L154.5 102.5L149.5 102.5ZM149.5 102.5L154.5 102.5L154.5 107.5L149.5 107.5ZM149.5 107.5L154.5 107.5L153.5 112.5L148.5 111.5ZM148.5 111.5L153.5 112.5L152.5 117.5L147.5 116.5ZM147.5 116.5L152.5 117.5L150.5 122.5L145.5 120.5ZM145.5 120.5L150.5 122.5L148.5 126.5L144.5 124.5ZM144.5 124.5L148.5 126.5L145.5 131.5L141.5 128.5ZM141.5 128.5L146.5 131.5L143.5 135.5L139.5 132.5ZM139.5 132.5L143.5 135.5L139.5 139.5L136.5 135.5ZM136.5 135.5L139.5 139.5L136.5 142.5L133.5 138.5ZM133.5 138.5L136.5 142.5L132.5 145.5L129.5 141.5ZM129.5 141.5L132.5 145.5L128.5 148.5L125.5 144.5ZM125.5 144.5L128.5 148.5L124.5 151.5L121.5 146.5ZM121.5 146.5L124.5 151.5L119.5 153.5L117.5 148.5ZM117.5 148.5L119.5 153.5L114.5 154.5L113.5 149.5ZM113.5 150.5L114.5 154.5L110.5 156.5L109.5 151.5ZM109.5 151.5L110.5 156.5L105.5 156.5L104.5 151.5ZM104.5 151.5L105.5 156.5L100.5 157.5L100.5 152.5ZM100.5 152.5L100.5 157.5L95.5 157.5L95.5 152.5ZM95.5 152.5L95.5 157.5L90.5 156.5L91.5 151.5ZM91.5 151.5L90.5 156.5L85.5 155.5L86.5 150.5ZM86.5 150.5L85.5 155.5L80.5 154.5L82.5 149.5ZM82.5 149.5L80.5 154.5L75.5 152.5L77.5 147.5ZM77.5 147.5L75.5 152.5L71.5 150.5L73.5 145.5ZM73.5 145.5L71.5 150.5L67.5 147.5L70.5 143.5ZM69.5 143.5L67.5 147.5L63.5 144.5L66.5 140.5ZM66.5 140.5L63.5 144.5L59.5 141.5L62.5 137.5ZM62.5 137.5L59.5 141.5L55.5 137.5L59.5 134.5ZM59.5 134.5L55.5 137.5L52.5 133.5L56.5 130.5ZM56.5 130.5L52.5 133.5L50.5 129.5L54.5 127.5ZM54.5 127.5L50.5 129.5L47.5 125.5L52.5 123.5ZM52.5 123.5L47.5 125.5L45.5 120.5L50.5 118.5ZM50.5 118.5L45.5 120.5L44.5 115.5L49.5 114.5ZM48.5 114.5L44.5 115.5L43.5 110.5L48.5 110.5ZM47.5 110.5L43.5 110.5L42.5 106.5L47.5 105.5ZM47.5 105.5L42.5 106.5L42.5 101.5L47.5 101.5ZM47.5 101.5L42.5 101.5L42.5 96.5L47.5 96.5ZM47.5 96.5L42.5 96.5L42.5 91.5L47.5 91.5ZM47.5 91.5L42.5 91.5L43.5 86.5L48.5 87.5ZM48.5 87.5L43.5 86.5L45.5 81.5L49.5 83.5ZM49.5 83.5L45.5 81.5L47.5 76.5L51.5 78.5ZM51.5 78.5L46.5 76.5L49.5 72.5L53.5 74.5ZM53.5 74.5L49.5 72.5L51.5 68.5L55.5 70.5ZM55.5 70.5L51.5 68.5L54.5 64.5L58.5 67.5ZM58.5 67.5L54.5 64.5L58.5 60.5L61.5 63.5ZM61.5 63.5L58.5 60.5L61.5 56.5L64.5 60.5ZM64.5 60.5L61.5 56.5L65.5 53.5L68.5 57.5ZM68.5 57.5L65.5 53.5L69.5 50.5L72.5 55.5ZM72.5 55.5L69.5 50.5L74.5 48.5L76.5 53.5ZM76.5 52.5L74.5 48.5L78.5 46.5L80.5 51.5ZM80.5 51.5L78.5 46.5L83.5 44.5L84.5 49.5ZM84.5 49.5L83.5 44.5L88.5 43.5L89.5 48.5ZM89.5 48.5L88.5 43.5L93.5 42.5L93.5 47.5ZM93.5 47.5L93.5 42.5L98.5 42.5L98.5 47.5ZM98.5 47.5L98.5 42.5L103.5 42.5L102.5 47.5ZM102.5 47.5L103.5 42.5L108.5 42.5L107.5 47.5ZM107.5 47.5L108.5 42.5L112.5 43.5L111.5 48.5ZM111.5 48.5L112.5 43.5L117.5 44.5L116.5 49.5ZM116.5 49.5L117.5 44.5L122.5 46.5L120.5 51.5ZM120.5 51.5L122.5 46.5L126.5 48.5L124.5 53.5ZM124.5 53.5L127.5 48.5L131.5 51.5L128.5 55.5ZM128.5 55.5L131.5 51.5L135.5 53.5L132.5 57.5ZM132.5 57.5L135.5 53.5L139.5 57.5L135.5 60.5ZM136.5 60.5L139.5 57.5L142.5 60.5L139.5 63.5ZM139.5 63.5L142.5 60.5L146.5 64.5L142.5 67.5ZM142.5 67.5L146.5 64.5L149.5 68.5L145.5 71.5ZM145.5 71.5L149.5 68.5L151.5 72.5L147.5 74.5ZM147.5 74.5L151.5 72.5L154.5 77.5L149.5 79.5ZM149.5 79.5L154.5 77.5L155.5 81.5L151.5 83.5ZM151.5 83.5L156.5 81.5L157.5 86.5L152.5 87.5ZM152.5 87.5L157.5 86.5L158.5 91.5L153.5 92.5ZM153.5 92.5L158.5 91.5L159.5 96.5L154.5 96.5ZM154.5 96.5L159.5 96.5L159.5 101.5L154.5 101.5ZM154.5 101.5L159.5 101.5L159.5 106.5L154.5 105.5ZM154.5 105.5L159.5 106.5L158.5 111.5L153.5 110.5ZM153.5 110.5L158.5 111.5L157.5 116.5L152.5 114.5ZM152.5 114.5L157.5 116.5L156.5 120.5L151.5 119.5ZM151.5 119.5L156.5 120.5L154.5 125.5L149.5 123.5ZM150.5 123.5L154.5 125.5L152.5 130.5L148.5 127.5ZM148.5 127.5L152.5 130.5L149.5 134.5L145.5 131.5ZM145.5 131.5L149.5 134.5L146.5 138.5L143.5 135.5ZM143.5 135.5L147.5 138.5L143.5 142.5L140.5 138.5ZM140.5 138.5L143.5 142.5L140.5 145.5L136.5 142.5ZM136.5 142.5L140.5 145.5L136.5 149.5L133.5 145.5ZM133.5 145.5L136.5 149.5L132.5 151.5L129.5 147.5ZM129.5 147.5L132.5 152.5L128.5 154.5L125.5 150.5ZM125.5 150.5L128.5 154.5L123.5 156.5L121.5 152.5ZM121.5 152.5L123.5 156.5L119.5 158.5L117.5 153.5ZM117.5 154.5L119.5 158.5L114.5 160.5L113.5 155.5ZM113.5 155.5L114.5 160.5L109.5 161.5L108.5 156.5ZM108.5 156.5L109.5 161.5L104.5 161.5L104.5 156.5ZM104.5 156.5L104.5 161.5L99.5 162.5L99.5 157.5ZM99.5 157.5L99.5 162.5L94.5 162.5L94.5 157.5ZM94.5 157.5L94.5 162.5L89.5 161.5L90.5 156.5ZM90.5 156.5L89.5 161.5L84.5 160.5L85.5 155.5ZM85.5 155.5L84.5 160.5L79.5 159.5L81.5 154.5ZM81.5 154.5L79.5 159.5L75.5 157.5L77.5 152.5ZM77.5 152.5L75.5 157.5L70.5 155.5L73.5 150.5ZM72.5 151.5L70.5 155.5L66.5 152.5L69.5 148.5ZM68.5 148.5L66.5 153.5L62.5 150.5L65.5 146.5ZM65.5 146.5L62.5 150.5L58.5 147.5L61.5 143.5ZM61.5 143.5L58.5 147.5L54.5 143.5L58.5 140.5ZM58.5 140.5L54.5 143.5L51.5 139.5L55.5 136.5ZM55.5 136.5L51.5 139.5L48.5 135.5L52.5 133.5ZM52.5 133.5L48.5 135.5L45.5 131.5L49.5 129.5ZM49.5 129.5L45.5 131.5L43.5 127.5L47.5 125.5ZM47.5 125.5L43.5 127.5L41.5 122.5L45.5 121.5ZM45.5 121.5L41.5 122.5L39.5 118.5L44.5 116.5ZM44.5 116.5L39.5 118.5L38.5 113.5L43.5 112.5ZM43.5 112.5L38.5 113.5L37.5 108.5L42.5 107.5ZM42.5 107.5L37.5 108.5L37.5 103.5L42.5 103.5ZM42.5 103.5L37.5 103.5L37.5 98.5L42.5 98.5ZM42.5 98.5L37.5 98.5L37.5 93.5L42.5 93.5ZM42.5 93.5L37.5 93.5L38.5 88.5L43.5 89.5ZM43.5 89.5L38.5 88.5L39.5 83.5L44.5 84.5ZM44.5 84.5L39.5 83.5L40.5 78.5L45.5 80.5ZM45.5 80.5L40.5 78.5L42.5 74.5L47.5 76.5ZM47.5 76.5L42.5 74.5L44.5 69.5L49.5 72.5ZM49.5 72.5L44.5 69.5L47.5 65.5L51.5 68.5ZM51.5 68.5L47.5 65.5L50.5 61.5L54.5 64.5ZM54.5 64.5L50.5 61.5L53.5 57.5L57.5 61.5ZM57.5 61.5L53.5 57.5L57.5 54.5L60.5 57.5ZM60.5 57.5L57.5 54.5L61.5 50.5L64.5 54.5ZM64.5 54.5L61.5 50.5L65.5 47.5L67.5 52.5ZM67.5 52.5L65.5 47.5L69.5 45.5L71.5 49.5ZM71.5 49.5L69.5 45.5L73.5 43.5L75.5 47.5ZM75.5 47.5L73.5 43.5L78.5 41.5L80.5 45.5ZM80.5 45.5L78.5 41.5L83.5 39.5L84.5 44.5ZM84.5 44.5L83.5 39.5L88.5 38.5L88.5 43.5ZM88.5 43.5L88.5 38.5L93.5 37.5L93.5 42.5ZM93.5 42.5L93.5 37.5L97.5 37.5L98.5 42.5ZM98.5 42.5L97.5 37.5L102.5 37.5L102.5 42.5ZM102.5 42.5L102.5 37.5L107.5 37.5L107.5 42.5ZM107.5 42.5L107.5 37.5L112.5 38.5L111.5 43.5ZM111.5 43.5L112.5 38.5L117.5 39.5L116.5 44.5ZM116.5 44.5L117.5 39.5L122.5 41.5L120.5 45.5ZM120.5 45.5L122.5 41.5L127.5 43.5L124.5 47.5ZM124.5 47.5L127.5 43.5L131.5 45.5L129.5 49.5ZM129.5 49.5L131.5 45.5L135.5 48.5L132.5 52.5ZM132.5 52.5L135.5 48.5L139.5 51.5L136.5 54.5ZM136.5 54.5L139.5 50.5L143.5 54.5L140.5 57.5ZM140.5 57.5L143.5 54.5L147.5 57.5L143.5 61.5ZM143.5 61.5L147.5 57.5L150.5 61.5L146.5 64.5ZM146.5 64.5L150.5 61.5L153.5 65.5L149.5 68.5ZM149.5 68.5L153.5 65.5L156.5 69.5L151.5 72.5ZM151.5 72.5L156.5 69.5L158.5 74.5L153.5 76.5ZM153.5 76.5L158.5 74.5L160.5 78.5L155.5 80.5ZM155.5 80.5L160.5 78.5L161.5 83.5L157.5 84.5ZM157.5 84.5L161.5 83.5L163.5 88.5L158.5 89.5ZM158.5 89.5L163.5 88.5L163.5 93.5L158.5 93.5ZM158.5 93.5L163.5 93.5L164.5 98.5L159.5 98.5ZM159.5 98.5L164.5 98.5L164.5 103.5L159.5 103.5ZM159.5 103.5L164.5 103.5L164.5 108.5L159.5 107.5ZM159.5 107.5L164.5 108.5L163.5 113.5L158.5 112.5ZM158.5 112.5L163.5 113.5L162.5 118.5L157.5 116.5ZM157.5 116.5L162.5 118.5L160.5 122.5L156.5 121.5ZM156.5 121.5L160.5 122.5L159.5 127.5L154.5 125.5ZM154.5 125.5L159.5 127.5L156.5 132.5L152.5 129.5ZM152.5 129.5L157.5 132.5L154.5 136.5L150.5 133.5ZM150.5 133.5L154.5 136.5L151.5 140.5L147.5 137.5ZM147.5 137.5L151.5 140.5L148.5 144.5L144.5 141.5ZM144.5 141.5L148.5 144.5L145.5 148.5L141.5 144.5ZM141.5 144.5L145.5 148.5L141.5 151.5L138.5 147.5ZM138.5 147.5L141.5 151.5L137.5 154.5L134.5 150.5ZM134.5 150.5L137.5 154.5L133.5 157.5L130.5 153.5ZM130.5 153.5L133.5 157.5L129.5 159.5L126.5 155.5ZM126.5 155.5L129.5 159.5L124.5 161.5L122.5 157.5ZM122.5 157.5L124.5 161.5L119.5 163.5L118.5 158.5ZM118.5 158.5L119.5 163.5L115.5 165.5L113.5 160.5ZM113.5 160.5L115.5 165.5L110.5 166.5L109.5 161.5ZM109.5 161.5L110.5 166.5L105.5 166.5L104.5 161.5ZM104.5 161.5L105.5 166.5L100.5 167.5L100.5 162.5ZM100.5 162.5L100.5 167.5L95.5 167.5L95.5 162.5ZM95.5 162.5L95.5 167.5L90.5 166.5L91.5 161.5ZM91.5 161.5L90.5 166.5L85.5 165.5L86.5 160.5ZM86.5 161.5L85.5 165.5L80.5 164.5L82.5 159.5ZM82.5 159.5L80.5 164.5L75.5 163.5L77.5 158.5ZM77.5 158.5L75.5 163.5L71.5 161.5L73.5 156.5ZM73.5 156.5L71.5 161.5L66.5 159.5L69.5 154.5ZM69.5 154.5L66.5 159.5L62.5 156.5L65.5 152.5ZM65.5 152.5L62.5 156.5L58.5 153.5L61.5 149.5ZM61.5 149.5L58.5 153.5L54.5 150.5L57.5 146.5ZM57.5 146.5L54.5 150.5L50.5 146.5L54.5 143.5ZM54.5 143.5L50.5 146.5L47.5 143.5L51.5 140.5ZM51.5 140.5L47.5 143.5L44.5 139.5L48.5 136.5ZM48.5 136.5L44.5 139.5L41.5 135.5L46.5 132.5ZM46.5 132.5L41.5 135.5L39.5 130.5L43.5 128.5ZM43.5 128.5L39.5 130.5L37.5 126.5L41.5 124.5ZM41.5 124.5L37.5 126.5L35.5 121.5L40.5 120.5ZM40.5 120.5L35.5 121.5L34.5 116.5L38.5 115.5ZM38.5 115.5L34.5 116.5L33.5 111.5L38.5 111.5ZM37.5 111.5L33.5 111.5L32.5 106.5L37.5 106.5ZM37.5 106.5L32.5 106.5L32.5 101.5L37.5 101.5ZM37.5 101.5L32.5 101.5L32.5 96.5L37.5 97.5ZM37.5 97.5L32.5 96.5L32.5 91.5L37.5 92.5ZM37.5 92.5L32.5 91.5L33.5 87.5L38.5 88.5ZM38.5 88.5L33.5 87.5L34.5 82.5L39.5 83.5ZM39.5 83.5L34.5 82.5L36.5 77.5L40.5 79.5ZM40.5 79.5L35.5 77.5L37.5 72.5L42.5 74.5ZM42.5 74.5L37.5 72.5L40.5 68.5L44.5 70.5ZM44.5 70.5L40.5 68.5L42.5 63.5L46.5 66.5ZM46.5 66.5L42.5 63.5L45.5 59.5L49.5 62.5ZM49.5 62.5L45.5 59.5L48.5 55.5L52.5 59.5ZM52.5 59.5L48.5 55.5L51.5 52.5L55.5 55.5ZM55.5 55.5L51.5 52.5L55.5 48.5L58.5 52.5ZM58.5 52.5L55.5 48.5L59.5 45.5L62.5 49.5ZM62.5 49.5L59.5 45.5L63.5 42.5L66.5 47.5ZM66.5 47.5L63.5 42.5L67.5 40.5L70.5 44.5ZM70.5 44.5L67.5 40.5L72.5 38.5L74.5 42.5ZM74.5 42.5L72.5 38.5L76.5 36.5L78.5 41.5ZM78.5 41.5L76.5 36.5L81.5 34.5L83.5 39.5ZM83.5 39.5L81.5 34.5L86.5 33.5L87.5 38.5ZM87.5 38.5L86.5 33.5L91.5 32.5L92.5 37.5ZM92.5 37.5L91.5 32.5L96.5 32.5L96.5 37.5ZM96.5 37.5L96.5 32.5L101.5 32.5L101.5 37.5ZM101.5 37.5L101.5 32.5L106.5 32.5L105.5 37.5ZM105.5 37.5L106.5 32.5L111.5 33.5L110.5 38.5ZM110.5 38.5L111.5 33.5L116.5 34.5L115.5 39.5ZM115.5 38.5L116.5 34.5L121.5 35.5L119.5 40.5ZM119.5 40.5L121.5 35.5L125.5 37.5L123.5 41.5ZM123.5 41.5L125.5 37.5L130.5 39.5L128.5 43.5ZM128.5 43.5L130.5 39.5L134.5 41.5L132.5 45.5ZM132.5 45.5L134.5 41.5L139.5 44.5L136.5 48.5ZM136.5 48.5L139.5 44.5L143.5 47.5L139.5 51.5ZM139.5 51.5L143.5 47.5L146.5 50.5L143.5 54.5ZM143.5 54.5L146.5 50.5L150.5 53.5L146.5 57.5ZM146.5 57.5L150.5 53.5L153.5 57.5L149.5 60.5ZM149.5 60.5L153.5 57.5L156.5 61.5L152.5 64.5ZM152.5 64.5L156.5 61.5L159.5 65.5L155.5 68.5ZM155.5 68.5L159.5 65.5L161.5 70.5L157.5 72.5ZM157.5 72.5L161.5 70.5L163.5 74.5L159.5 76.5ZM159.5 76.5L164.5 74.5L165.5 79.5L161.5 80.5ZM161.5 80.5L165.5 79.5L167.5 84.5L162.5 85.5ZM162.5 85.5L167.5 84.5L168.5 89.5L163.5 89.5ZM163.5 89.5L168.5 89.5L169.5 93.5L164.5 94.5ZM164.5 94.5L169.5 93.5L169.5 98.5L164.5 99.5ZM164.5 99.5L169.5 98.5L169.5 103.5L164.5 103.5ZM164.5 103.5L169.5 103.5L169.5 108.5L164.5 108.5ZM164.5 108.5L169.5 108.5L168.5 113.5L163.5 112.5ZM163.5 112.5L168.5 113.5L167.5 118.5L162.5 117.5ZM162.5 117.5L167.5 118.5L165.5 123.5L161.5 121.5ZM161.5 121.5L166.5 123.5L164.5 128.5L159.5 126.5ZM159.5 126.5L164.5 128.5L162.5 132.5L157.5 130.5ZM157.5 130.5L162.5 132.5L159.5 137.5L155.5 134.5ZM155.5 134.5L159.5 137.5L157.5 141.5L153.5 138.5ZM153.5 138.5L157.5 141.5L154.5 145.5L150.5 142.5ZM150.5 142.5L154.5 145.5L150.5 149.5L147.5 145.5ZM147.5 145.5L151.5 149.5L147.5 152.5L144.5 149.5ZM144.5 149.5L147.5 152.5L143.5 156.5L140.5 152.5ZM140.5 152.5L143.5 156.5L139.5 159.5L136.5 155.5ZM136.5 155.5L139.5 159.5L135.5 161.5L133.5 157.5ZM133.5 157.5L135.5 161.5L131.5 164.5L128.5 159.5ZM129.5 159.5L131.5 164.5L126.5 166.5L124.5 161.5ZM124.5 161.5L126.5 166.5L122.5 168.5L120.5 163.5ZM120.5 163.5L122.5 168.5L117.5 169.5L116.5 164.5ZM116.5 164.5L117.5 169.5L112.5 170.5L111.5 165.5ZM111.5 166.5L112.5 170.5L107.5 171.5L106.5 166.5ZM106.5 166.5L107.5 171.5L102.5 172.5L102.5 167.5ZM102.5 167.5L102.5 172.5L97.5 172.5L97.5 167.5ZM97.5 167.5L97.5 172.5L92.5 171.5L93.5 166.5ZM93.5 167.5L92.5 171.5L87.5 171.5L88.5 166.5ZM88.5 166.5L87.5 171.5L82.5 170.5L83.5 165.5ZM83.5 165.5L82.5 170.5L77.5 169.5L79.5 164.5ZM79.5 164.5L77.5 169.5L73.5 167.5L74.5 162.5ZM74.5 162.5L73.5 167.5L68.5 165.5L70.5 160.5ZM70.5 161.5L68.5 165.5L64.5 163.5L66.5 158.5ZM66.5 158.5L64.5 163.5L59.5 160.5L62.5 156.5ZM62.5 156.5L59.5 160.5L55.5 157.5L58.5 153.5ZM58.5 153.5L55.5 157.5L51.5 154.5L55.5 150.5ZM55.5 150.5L51.5 154.5L48.5 151.5L51.5 147.5ZM51.5 147.5L48.5 151.5L44.5 147.5L48.5 144.5ZM48.5 144.5L44.5 147.5L41.5 143.5L45.5 140.5ZM45.5 140.5L41.5 143.5L38.5 139.5L42.5 136.5ZM42.5 136.5L38.5 139.5L36.5 135.5L40.5 132.5ZM40.5 133.5L36.5 135.5L33.5 130.5L38.5 128.5ZM38.5 128.5L33.5 130.5L31.5 126.5L36.5 124.5ZM36.5 124.5L31.5 126.5L30.5 121.5L35.5 120.5ZM35.5 120.5L30.5 121.5L28.5 116.5L33.5 115.5ZM33.5 115.5L28.5 116.5L28.5 111.5L32.5 111.5ZM32.5 111.5L27.5 111.5L27.5 106.5L32.5 106.5ZM32.5 106.5L27.5 106.5L27.5 101.5L32.5 101.5ZM32.5 101.5L27.5 101.5L27.5 96.5L32.5 97.5ZM32.5 97.5L27.5 96.5L27.5 92.5L32.5 92.5ZM32.5 92.5L27.5 91.5L28.5 87.5L33.5 88.5ZM33.5 88.5L28.5 87.5L29.5 82.5L34.5 83.5ZM34.5 83.5L29.5 82.5L30.5 77.5L35.5 79.5ZM35.5 79.5L30.5 77.5L32.5 72.5L37.5 74.5ZM37.5 74.5L32.5 72.5L34.5 68.5L38.5 70.5ZM38.5 70.5L34.5 68.5L36.5 63.5L41.5 66.5ZM41.5 66.5L36.5 63.5L39.5 59.5L43.5 62.5ZM43.5 62.5L39.5 59.5L42.5 55.5L46.5 58.5ZM46.5 58.5L42.5 55.5L45.5 51.5L49.5 55.5ZM49.5 54.5L45.5 51.5L49.5 48.5L52.5 51.5ZM52.5 51.5L49.5 48.5L52.5 44.5L55.5 48.5ZM55.5 48.5L52.5 44.5L56.5 41.5L59.5 45.5ZM59.5 45.5L56.5 41.5L60.5 38.5L63.5 43.5ZM63.5 42.5L60.5 38.5L65.5 36.5L67.5 40.5ZM67.5 40.5L65.5 36.5L69.5 34.5L71.5 38.5ZM71.5 38.5L69.5 33.5L74.5 32.5L75.5 36.5ZM75.5 36.5L74.5 32.5L78.5 30.5L80.5 35.5ZM80.5 35.5L78.5 30.5L83.5 29.5L84.5 34.5ZM84.5 34.5L83.5 29.5L88.5 28.5L89.5 33.5ZM89.5 33.5L88.5 28.5L93.5 27.5L94.5 32.5ZM94.5 32.5L93.5 27.5L98.5 27.5L98.5 32.5ZM98.5 32.5L98.5 27.5L103.5 27.5L103.5 32.5ZM103.5 32.5L103.5 27.5L108.5 27.5L107.5 32.5ZM107.5 32.5L108.5 27.5L113.5 28.5L112.5 33.5ZM112.5 33.5L113.5 28.5L118.5 29.5L117.5 34.5ZM117.5 34.5L118.5 29.5L123.5 30.5L121.5 35.5ZM121.5 35.5L123.5 30.5L127.5 32.5L125.5 37.5ZM125.5 37.5L127.5 32.5L132.5 34.5L130.5 39.5ZM130.5 39.5L132.5 34.5L136.5 36.5L134.5 41.5ZM134.5 41.5L136.5 36.5L141.5 39.5L138.5 43.5ZM138.5 43.5L141.5 39.5L145.5 42.5L142.5 46.5ZM142.5 46.5L145.5 42.5L149.5 45.5L145.5 49.5ZM145.5 49.5L149.5 45.5L152.5 49.5L149.5 52.5ZM149.5 52.5L152.5 49.5L156.5 52.5L152.5 55.5ZM152.5 55.5L156.5 52.5L159.5 56.5L155.5 59.5ZM155.5 59.5L159.5 56.5L162.5 60.5L157.5 63.5ZM157.5 63.5L162.5 60.5L164.5 64.5L160.5 67.5ZM160.5 67.5L164.5 64.5L167.5 69.5L162.5 71.5ZM162.5 71.5L167.5 69.5L169.5 73.5L164.5 75.5ZM164.5 75.5L169.5 73.5L170.5 78.5L166.5 80.5ZM166.5 80.5L170.5 78.5L172.5 83.5L167.5 84.5ZM167.5 84.5L172.5 83.5L173.5 88.5L168.5 89.5ZM168.5 89.5L173.5 88.5L173.5 93.5L168.5 93.5ZM169.5 93.5L174.5 93.5L174.5 98.5L169.5 98.5ZM169.5 98.5L174.5 98.5L174.5 103.5L169.5 103.5ZM169.5 103.5L174.5 103.5L174.5 108.5L169.5 107.5ZM169.5 107.5L174.5 108.5L173.5 113.5L168.5 112.5ZM168.5 112.5L173.5 113.5L172.5 118.5L167.5 116.5ZM167.5 116.5L172.5 118.5L171.5 122.5L166.5 121.5ZM166.5 121.5L171.5 122.5L169.5 127.5L165.5 125.5ZM165.5 125.5L169.5 127.5L167.5 132.5L163.5 130.5ZM163.5 130.5L168.5 132.5L165.5 136.5L161.5 134.5ZM161.5 134.5L165.5 136.5L163.5 141.5L159.5 138.5ZM159.5 138.5L163.5 141.5L160.5 145.5L156.5 142.5ZM156.5 142.5L160.5 145.5L157.5 149.5L153.5 146.5ZM153.5 146.5L157.5 149.5L154.5 153.5L150.5 149.5ZM150.5 149.5L154.5 153.5L150.5 156.5L147.5 152.5ZM147.5 152.5L150.5 156.5L147.5 159.5L143.5 155.5ZM143.5 156.5L147.5 159.5L143.5 162.5L140.5 158.5ZM140.5 158.5L143.5 162.5L138.5 165.5L136.5 161.5ZM136.5 161.5L138.5 165.5L134.5 168.5L132.5 163.5ZM132.5 163.5L134.5 168.5L130.5 170.5L128.5 165.5ZM128.5 165.5L130.5 170.5L125.5 172.5L123.5 167.5ZM123.5 167.5L125.5 172.5L120.5 173.5L119.5 169.5ZM119.5 169.5L120.5 173.5L115.5 175.5L114.5 170.5ZM114.5 170.5L115.5 175.5L111.5 176.5L110.5 171.5ZM110.5 171.5L111.5 176.5L106.5 176.5L105.5 171.5ZM105.5 171.5L106.5 176.5L101.5 177.5L101.5 172.5ZM101.5 172.5L101.5 177.5L96.5 177.5L96.5 172.5ZM96.5 172.5L96.5 177.5L91.5 176.5L91.5 171.5ZM91.5 171.5L91.5 176.5L86.5 176.5L87.5 171.5ZM87.5 171.5L86.5 176.5L81.5 175.5L82.5 170.5ZM82.5 170.5L81.5 175.5L76.5 173.5L77.5 169.5ZM77.5 169.5L76.5 173.5L71.5 172.5L73.5 167.5ZM73.5 167.5L71.5 172.5L67.5 170.5L69.5 165.5ZM69.5 165.5L67.5 170.5L62.5 168.5L65.5 163.5ZM65.5 163.5L62.5 168.5L58.5 165.5L61.5 161.5ZM60.5 161.5L58.5 165.5L54.5 162.5L57.5 158.5ZM57.5 158.5L54.5 162.5L50.5 159.5L53.5 156.5ZM53.5 156.5L50.5 159.5L46.5 156.5L49.5 152.5ZM49.5 152.5L46.5 156.5L42.5 153.5L46.5 149.5ZM46.5 149.5L42.5 153.5L39.5 149.5L43.5 146.5ZM43.5 146.5L39.5 149.5L36.5 145.5L40.5 142.5ZM40.5 142.5L36.5 145.5L33.5 141.5L38.5 138.5ZM38.5 138.5L33.5 141.5L31.5 136.5L35.5 134.5ZM35.5 134.5L31.5 136.5L29.5 132.5L33.5 130.5ZM33.5 130.5L29.5 132.5L27.5 127.5L31.5 126.5ZM31.5 126.5L27.5 127.5L25.5 123.5L30.5 121.5ZM30.5 121.5L25.5 123.5L24.5 118.5L29.5 117.5ZM28.5 117.5L24.5 118.5L23.5 113.5L28.5 112.5ZM28.5 112.5L23.5 113.5L22.5 108.5L27.5 107.5ZM27.5 107.5L22.5 108.5L22.5 103.5L27.5 103.5ZM27.5 103.5L22.5 103.5L22.5 98.5L27.5 98.5ZM27.5 98.5L22.5 98.5L22.5 93.5L27.5 93.5ZM27.5 93.5L22.5 93.5L22.5 88.5L27.5 89.5ZM27.5 89.5L22.5 88.5L23.5 83.5L28.5 84.5ZM28.5 84.5L23.5 83.5L25.5 78.5L29.5 80.5ZM29.5 80.5L25.5 78.5L26.5 73.5L31.5 75.5ZM31.5 75.5L26.5 73.5L28.5 69.5L33.5 71.5ZM32.5 71.5L28.5 69.5L30.5 64.5L35.5 67.5ZM34.5 67.5L30.5 64.5L33.5 60.5L37.5 63.5ZM37.5 63.5L32.5 60.5L35.5 56.5L39.5 59.5ZM39.5 59.5L35.5 56.5L38.5 52.5L42.5 55.5ZM42.5 55.5L38.5 52.5L41.5 48.5L45.5 51.5ZM45.5 51.5L41.5 48.5L45.5 44.5L48.5 48.5ZM48.5 48.5L45.5 44.5L48.5 41.5L52.5 45.5ZM52.5 45.5L48.5 41.5L52.5 38.5L55.5 42.5ZM55.5 42.5L52.5 38.5L56.5 35.5L59.5 39.5ZM59.5 39.5L56.5 35.5L61.5 32.5L63.5 37.5ZM63.5 37.5L61.5 32.5L65.5 30.5L67.5 34.5ZM67.5 34.5L65.5 30.5L70.5 28.5L72.5 32.5ZM71.5 32.5L70.5 28.5L74.5 26.5L76.5 31.5ZM76.5 31.5L74.5 26.5L79.5 25.5L80.5 29.5ZM80.5 29.5L79.5 25.5L84.5 23.5L85.5 28.5ZM85.5 28.5L84.5 23.5L89.5 23.5L90.5 28.5ZM90.5 27.5L89.5 23.5L94.5 22.5L94.5 27.5ZM94.5 27.5L94.5 22.5L99.5 22.5L99.5 27.5ZM99.5 27.5L99.5 22.5L104.5 22.5L104.5 27.5ZM104.5 27.5L104.5 22.5L109.5 22.5L108.5 27.5ZM108.5 27.5L109.5 22.5L114.5 23.5L113.5 28.5ZM113.5 28.5L114.5 23.5L119.5 24.5L117.5 29.5ZM117.5 29.5L119.5 24.5L123.5 25.5L122.5 30.5ZM122.5 30.5L123.5 25.5L128.5 27.5L126.5 32.5ZM126.5 32.5L128.5 27.5L133.5 29.5L131.5 34.5ZM131.5 33.5L133.5 29.5L137.5 31.5L135.5 36.5ZM135.5 36.5L137.5 31.5L142.5 34.5L139.5 38.5ZM139.5 38.5L142.5 34.5L146.5 37.5L143.5 41.5ZM143.5 41.5L146.5 36.5L150.5 40.5L146.5 43.5ZM146.5 43.5L150.5 40.5L153.5 43.5L150.5 46.5ZM150.5 46.5L153.5 43.5L157.5 46.5L153.5 50.5ZM153.5 50.5L157.5 46.5L160.5 50.5L156.5 53.5ZM156.5 53.5L160.5 50.5L163.5 54.5L159.5 57.5ZM159.5 57.5L163.5 54.5L166.5 58.5L162.5 61.5ZM162.5 61.5L166.5 58.5L169.5 62.5L164.5 65.5ZM164.5 65.5L169.5 62.5L171.5 67.5L167.5 69.5ZM167.5 69.5L171.5 67.5L173.5 71.5L168.5 73.5ZM169.5 73.5L173.5 71.5L175.5 76.5L170.5 78.5ZM170.5 78.5L175.5 76.5L176.5 81.5L171.5 82.5ZM171.5 82.5L176.5 81.5L177.5 86.5L173.5 87.5ZM173.5 87.5L177.5 86.5L178.5 91.5L173.5 91.5ZM173.5 91.5L178.5 91.5L179.5 96.5L174.5 96.5ZM174.5 96.5L179.5 96.5L179.5 101.5L174.5 101.5ZM174.5 101.5L179.5 101.5L179.5 106.5L174.5 105.5ZM174.5 105.5L179.5 106.5L178.5 111.5L173.5 110.5ZM174.5 110.5L178.5 111.5L178.5 116.5L173.5 115.5ZM173.5 115.5L178.5 116.5L177.5 120.5L172.5 119.5ZM172.5 119.5L177.5 120.5L175.5 125.5L171.5 124.5ZM171.5 124.5L175.5 125.5L174.5 130.5L169.5 128.5ZM169.5 128.5L174.5 130.5L172.5 135.5L167.5 132.5ZM167.5 132.5L172.5 135.5L170.5 139.5L165.5 137.5ZM165.5 137.5L170.5 139.5L167.5 143.5L163.5 141.5ZM163.5 141.5L167.5 143.5L164.5 148.5L160.5 145.5ZM160.5 145.5L164.5 148.5L161.5 151.5L157.5 148.5ZM157.5 148.5L161.5 152.5L158.5 155.5L154.5 152.5ZM154.5 152.5L158.5 155.5L155.5 159.5L151.5 155.5ZM151.5 155.5L155.5 159.5L151.5 162.5L148.5 158.5ZM148.5 158.5L151.5 162.5L147.5 165.5L144.5 161.5ZM144.5 161.5L147.5 165.5L143.5 168.5L140.5 164.5ZM140.5 164.5L143.5 168.5L139.5 171.5L136.5 167.5ZM136.5 167.5L139.5 171.5L134.5 173.5L132.5 169.5ZM132.5 169.5L134.5 173.5L130.5 175.5L128.5 171.5ZM128.5 171.5L130.5 175.5L125.5 177.5L123.5 172.5ZM123.5 172.5L125.5 177.5L120.5 179.5L119.5 174.5ZM119.5 174.5L120.5 179.5L115.5 180.5L114.5 175.5ZM114.5 175.5L115.5 180.5L111.5 181.5L110.5 176.5ZM110.5 176.5L111.5 181.5L106.5 181.5L105.5 176.5ZM105.5 176.5L106.5 181.5L101.5 182.5L101.5 177.5ZM100.5 177.5L101.5 182.5L96.5 182.5L96.5 177.5ZM96.5 177.5L96.5 182.5L91.5 181.5L91.5 176.5ZM91.5 176.5L91.5 181.5L86.5 181.5L86.5 176.5ZM86.5 176.5L86.5 181.5L81.5 180.5L82.5 175.5ZM82.5 175.5L81.5 180.5L76.5 179.5L77.5 174.5ZM77.5 174.5L76.5 179.5L71.5 177.5L73.5 172.5ZM73.5 172.5L71.5 177.5L66.5 175.5L68.5 171.5ZM68.5 171.5L66.5 175.5L62.5 173.5L64.5 169.5ZM64.5 169.5L62.5 173.5L58.5 171.5L60.5 167.5ZM60.5 167.5L58.5 171.5L53.5 168.5L56.5 164.5ZM56.5 164.5L53.5 168.5L49.5 165.5L52.5 161.5ZM52.5 161.5L49.5 165.5L45.5 162.5L49.5 158.5ZM49.5 158.5L45.5 162.5L42.5 159.5L45.5 155.5ZM45.5 155.5L42.5 159.5L38.5 155.5L42.5 152.5ZM42.5 152.5L38.5 155.5L35.5 151.5L39.5 148.5ZM39.5 148.5L35.5 152.5L32.5 148.5L36.5 145.5ZM36.5 145.5L32.5 148.5L29.5 143.5L33.5 141.5ZM33.5 141.5L29.5 143.5L27.5 139.5L31.5 137.5ZM31.5 137.5L27.5 139.5L24.5 135.5L29.5 133.5ZM29.5 133.5L24.5 135.5L22.5 130.5L27.5 128.5ZM27.5 128.5L22.5 130.5L21.5 125.5L25.5 124.5ZM25.5 124.5L21.5 125.5L19.5 121.5L24.5 119.5ZM24.5 119.5L19.5 121.5L18.5 116.5L23.5 115.5ZM23.5 115.5L18.5 116.5L17.5 111.5L22.5 110.5ZM22.5 110.5L17.5 111.5L17.5 106.5L22.5 105.5ZM22.5 105.5L17.5 106.5L17.5 101.5L22.5 101.5ZM22.5 101.5L17.5 101.5L17.5 96.5L22.5 96.5ZM22.5 96.5L17.5 96.5L17.5 91.5L22.5 91.5ZM22.5 91.5L17.5 91.5L18.5 86.5L23.5 87.5ZM23.5 87.5L18.5 86.5L19.5 81.5L24.5 82.5ZM24.5 82.5L19.5 81.5L20.5 76.5L25.5 78.5ZM25.5 78.5L20.5 76.5L22.5 71.5L26.5 73.5ZM26.5 73.5L22.5 71.5L23.5 67.5L28.5 69.5ZM28.5 69.5L23.5 67.5L26.5 62.5L30.5 65.5ZM30.5 64.5L26.5 62.5L28.5 58.5L32.5 60.5ZM32.5 60.5L28.5 58.5L31.5 54.5L35.5 56.5ZM35.5 56.5L31.5 54.5L34.5 50.5L37.5 53.5ZM37.5 53.5L33.5 50.5L37.5 46.5L40.5 49.5ZM40.5 49.5L37.5 46.5L40.5 42.5L44.5 46.5ZM44.5 45.5L40.5 42.5L44.5 39.5L47.5 42.5ZM47.5 42.5L44.5 38.5L47.5 35.5L51.5 39.5ZM50.5 39.5L47.5 35.5L51.5 32.5L54.5 36.5ZM54.5 36.5L51.5 32.5L56.5 29.5L58.5 34.5ZM58.5 34.5L56.5 29.5L60.5 27.5L62.5 31.5ZM62.5 31.5L60.5 27.5L64.5 25.5L66.5 29.5ZM66.5 29.5L64.5 25.5L69.5 23.5L71.5 27.5ZM71.5 27.5L69.5 23.5L74.5 21.5L75.5 26.5ZM75.5 26.5L74.5 21.5L78.5 20.5L80.5 24.5ZM80.5 24.5L78.5 20.5L83.5 18.5L84.5 23.5ZM84.5 23.5L83.5 18.5L88.5 18.5L89.5 23.5ZM93.5 22.5L93.5 17.5L98.5 17.5L98.5 22.5ZM98.5 22.5L98.5 17.5L103.5 17.5L103.5 22.5ZM103.5 22.5L103.5 17.5L108.5 17.5L108.5 22.5ZM108.5 22.5L108.5 17.5L113.5 18.5L112.5 23.5ZM112.5 23.5L113.5 18.5L118.5 19.5L117.5 24.5ZM117.5 24.5L118.5 19.5L123.5 20.5L121.5 25.5ZM121.5 25.5L123.5 20.5L128.5 22.5L126.5 26.5ZM126.5 26.5L128.5 21.5L132.5 23.5L130.5 28.5ZM130.5 28.5L132.5 23.5L137.5 25.5L135.5 30.5ZM135.5 30.5L137.5 25.5L141.5 28.5L139.5 32.5ZM139.5 32.5L141.5 28.5L145.5 30.5L143.5 34.5ZM147.5 37.5L150.5 33.5L154.5 36.5L150.5 40.5ZM150.5 40.5L154.5 36.5L157.5 40.5L154.5 43.5ZM157.5 46.5L161.5 43.5L164.5 47.5L160.5 50.5ZM160.5 50.5L164.5 47.5L167.5 51.5L163.5 54.5ZM163.5 54.5L167.5 51.5L170.5 55.5L166.5 58.5ZM176.5 79.5L181.5 77.5L182.5 82.5L177.5 83.5ZM179.5 93.5L184.5 92.5L184.5 97.5L179.5 97.5ZM178.5 116.5L183.5 117.5L181.5 122.5L177.5 121.5Z" fill="#00d800" stroke="#d2d2d2" stroke-width="1" shape-rendering="crispEdges"/><path d="M89.5 23.5L88.5 18.5L93.5 17.5L93.5 22.5ZM143.5 34.5L145.5 30.5L150.5 33.5L147.5 37.5ZM154.5 43.5L157.5 40.5L161.5 43.5L157.5 46.5ZM166.5 57.5L170.5 55.5L173.5 59.5L168.5 62.5ZM168.5 61.5L173.5 59.5L175.5 63.5L171.5 66.5ZM171.5 66.5L175.5 63.5L177.5 68.5L173.5 70.5ZM173.5 70.5L177.5 68.5L179.5 73.5L174.5 74.5ZM174.5 74.5L179.5 73.5L181.5 77.5L176.5 79.5ZM177.5 83.5L182.5 82.5L183.5 87.5L178.5 88.5ZM178.5 88.5L183.5 87.5L183.5 92.5L178.5 93.5ZM179.5 97.5L184.5 97.5L184.5 102.5L179.5 102.5ZM179.5 102.5L184.5 102.5L184.5 107.5L179.5 107.5ZM179.5 107.5L184.5 107.5L183.5 112.5L178.5 111.5ZM178.5 111.5L183.5 112.5L183.5 117.5L178.5 116.5ZM177.5 121.5L181.5 122.5L180.5 127.5L175.5 125.5ZM175.5 125.5L180.5 127.5L178.5 131.5L174.5 130.5ZM174.5 130.5L179.5 131.5L177.5 136.5L172.5 134.5ZM172.5 134.5L177.5 136.5L174.5 140.5L170.5 138.5ZM170.5 138.5L174.5 141.5L172.5 145.5L168.5 142.5ZM168.5 142.5L172.5 145.5L169.5 149.5L165.5 146.5ZM165.5 146.5L169.5 149.5L166.5 153.5L162.5 150.5ZM162.5 150.5L166.5 153.5L163.5 157.5L159.5 154.5ZM159.5 154.5L163.5 157.5L160.5 161.5L156.5 157.5ZM156.5 157.5L160.5 161.5L156.5 164.5L153.5 160.5ZM153.5 160.5L156.5 164.5L152.5 167.5L149.5 164.5ZM149.5 164.5L153.5 167.5L149.5 170.5L146.5 166.5ZM146.5 166.5L149.5 170.5L144.5 173.5L142.5 169.5ZM142.5 169.5L144.5 173.5L140.5 176.5L138.5 171.5ZM138.5 171.5L140.5 176.5L136.5 178.5L134.5 174.5ZM134.5 174.5L136.5 178.5L131.5 180.5L129.5 176.5ZM129.5 176.5L131.5 180.5L126.5 182.5L125.5 177.5ZM125.5 177.5L126.5 182.5L122.5 183.5L120.5 179.5ZM120.5 179.5L122.5 183.5L117.5 185.5L116.5 180.5ZM116.5 180.5L117.5 185.5L112.5 186.5L111.5 181.5ZM111.5 181.5L112.5 186.5L107.5 186.5L107.5 181.5ZM107.5 181.5L107.5 186.5L102.5 187.5L102.5 182.5ZM102.5 182.5L102.5 187.5L97.5 187.5L97.5 182.5ZM97.5 182.5L97.5 187.5L92.5 186.5L92.5 182.5ZM92.5 182.5L92.5 187.5L87.5 186.5L88.5 181.5ZM88.5 181.5L87.5 186.5L82.5 185.5L83.5 180.5ZM83.5 180.5L82.5 185.5L77.5 184.5L78.5 179.5ZM78.5 179.5L77.5 184.5L72.5 183.5L74.5 178.5ZM74.5 178.5L72.5 183.5L68.5 181.5L70.5 176.5ZM69.5 177.5L68.5 181.5L63.5 179.5L65.5 175.5ZM65.5 175.5L63.5 179.5L59.5 177.5L61.5 173.5ZM61.5 173.5L59.5 177.5L54.5 175.5L57.5 170.5ZM57.5 170.5L54.5 175.5L50.5 172.5L53.5 168.5ZM53.5 168.5L50.5 172.5L46.5 169.5L49.5 165.5ZM49.5 165.5L46.5 169.5L42.5 166.5L45.5 162.5ZM45.5 162.5L42.5 166.5L38.5 163.5L42.5 159.5ZM42.5 159.5L38.5 163.5L35.5 159.5L39.5 156.5ZM38.5 156.5L35.5 159.5L32.5 155.5L35.5 152.5ZM35.5 152.5L31.5 155.5L28.5 151.5L33.5 148.5ZM32.5 148.5L28.5 151.5L26.5 147.5L30.5 145.5ZM30.5 145.5L26.5 147.5L23.5 143.5L27.5 141.5ZM27.5 141.5L23.5 143.5L21.5 139.5L25.5 136.5ZM25.5 136.5L21.5 139.5L19.5 134.5L23.5 132.5ZM23.5 132.5L19.5 134.5L17.5 129.5L21.5 128.5ZM21.5 128.5L17.5 129.5L15.5 125.5L20.5 123.5ZM20.5 123.5L15.5 125.5L14.5 120.5L19.5 119.5ZM19.5 119.5L14.5 120.5L13.5 115.5L18.5 114.5ZM18.5 114.5L13.5 115.5L12.5 110.5L17.5 109.5ZM17.5 109.5L12.5 110.5L12.5 105.5L17.5 105.5ZM17.5 105.5L12.5 105.5L12.5 100.5L17.5 100.5ZM16.5 100.5L11.5 100.5L12.5 95.5L17.5 95.5ZM17.5 95.5L12.5 95.5L12.5 90.5L17.5 91.5ZM17.5 91.5L12.5 90.5L13.5 85.5L18.5 86.5ZM18.5 86.5L13.5 85.5L14.5 80.5L19.5 81.5ZM19.5 81.5L14.5 80.5L15.5 75.5L20.5 77.5ZM20.5 77.5L15.5 75.5L17.5 71.5L21.5 72.5ZM21.5 72.5L16.5 71.5L18.5 66.5L23.5 68.5ZM23.5 68.5L18.5 66.5L20.5 61.5L25.5 64.5ZM25.5 64.5L20.5 61.5L23.5 57.5L27.5 59.5ZM27.5 59.5L23.5 57.5L25.5 53.5L29.5 55.5ZM29.5 55.5L25.5 53.5L28.5 49.5L32.5 51.5ZM32.5 51.5L28.5 48.5L31.5 45.5L35.5 48.5ZM35.5 48.5L31.5 45.5L34.5 41.5L38.5 44.5ZM38.5 44.5L34.5 41.5L38.5 37.5L41.5 41.5ZM41.5 41.5L38.5 37.5L41.5 34.5L45.5 38.5ZM45.5 37.5L41.5 34.5L45.5 31.5L48.5 35.5ZM48.5 34.5L45.5 31.5L49.5 28.5L52.5 32.5ZM52.5 32.5L49.5 28.5L53.5 25.5L56.5 29.5ZM56.5 29.5L53.5 25.5L58.5 22.5L60.5 27.5ZM60.5 27.5L58.5 22.5L62.5 20.5L64.5 25.5ZM64.5 25.5L62.5 20.5L67.5 18.5L69.5 23.5ZM69.5 23.5L67.5 18.5L72.5 16.5L73.5 21.5ZM73.5 21.5L72.5 16.5L76.5 15.5L78.5 20.5ZM78.5 20.5L76.5 15.5L81.5 14.5L82.5 19.5ZM82.5 19.5L81.5 14.5L86.5 13.5L87.5 18.5ZM87.5 18.5L86.5 13.5L91.5 12.5L92.5 17.5ZM91.5 17.5L91.5 12.5L96.5 12.5L96.5 17.5ZM96.5 17.5L96.5 12.5L101.5 12.5L101.5 17.5ZM101.5 17.5L101.5 12.5L106.5 12.5L106.5 17.5ZM106.5 17.5L106.5 12.5L111.5 13.5L110.5 17.5ZM110.5 17.5L111.5 12.5L116.5 13.5L115.5 18.5ZM115.5 18.5L116.5 13.5L121.5 14.5L120.5 19.5ZM120.5 19.5L121.5 14.5L126.5 16.5L124.5 20.5ZM124.5 20.5L126.5 16.5L130.5 17.5L129.5 22.5ZM129.5 22.5L130.5 17.5L135.5 19.5L133.5 24.5ZM133.5 24.5L135.5 19.5L140.5 21.5L137.5 26.5ZM137.5 26.5L140.5 21.5L144.5 24.5L141.5 28.5ZM141.5 28.5L144.5 23.5L148.5 26.5L145.5 30.5ZM145.5 30.5L148.5 26.5L152.5 29.5L149.5 33.5ZM149.5 33.5L152.5 29.5L156.5 32.5L153.5 36.5ZM153.5 36.5L156.5 32.5L160.5 35.5L157.5 39.5ZM157.5 39.5L160.5 35.5L164.5 39.5L160.5 42.5ZM160.5 42.5L164.5 39.5L167.5 42.5L163.5 46.5ZM163.5 46.5L167.5 42.5L170.5 46.5L166.5 49.5ZM166.5 49.5L170.5 46.5L173.5 50.5L169.5 53.5ZM169.5 53.5L173.5 50.5L176.5 55.5L172.5 57.5ZM172.5 57.5L176.5 55.5L178.5 59.5L174.5 61.5ZM174.5 61.5L178.5 59.5L181.5 63.5L176.5 65.5ZM176.5 65.5L181.5 63.5L183.5 68.5L178.5 70.5ZM178.5 70.5L183.5 68.5L184.5 73.5L180.5 74.5ZM180.5 74.5L184.5 73.5L186.5 77.5L181.5 79.5ZM181.5 79.5L186.5 77.5L187.5 82.5L182.5 83.5ZM182.5 83.5L187.5 82.5L188.5 87.5L183.5 88.5ZM183.5 88.5L188.5 87.5L188.5 92.5L184.5 93.5ZM184.5 93.5L189.5 92.5L189.5 97.5L184.5 97.5ZM184.5 97.5L189.5 97.5L189.5 102.5L184.5 102.5ZM184.5 102.5L189.5 102.5L189.5 107.5L184.5 107.5ZM184.5 107.5L189.5 107.5L188.5 112.5L183.5 111.5ZM183.5 111.5L188.5 112.5L188.5 117.5L183.5 116.5ZM183.5 116.5L188.5 117.5L187.5 122.5L182.5 121.5ZM182.5 121.5L187.5 122.5L185.5 127.5L181.5 125.5ZM181.5 125.5L185.5 127.5L184.5 131.5L179.5 130.5ZM179.5 130.5L184.5 131.5L182.5 136.5L177.5 134.5ZM177.5 134.5L182.5 136.5L180.5 141.5L175.5 138.5ZM175.5 138.5L180.5 141.5L178.5 145.5L173.5 143.5Z" fill="#ff0000" stroke="#d2d2d2" stroke-width="1" shape-rendering="crispEdges"/>
</svg>
<!-- legend -->
<div class="a" style="left:535px;top:445px;width:7px;height:7px;background:#00d800;border:1px solid #c8c8c8"></div>
<div class="a" style="left:535px;top:470px;width:7px;height:7px;background:#ff0000;border:1px solid #c8c8c8"></div>
<!-- sidebar -->
<div class="sb" style="top:93px"></div>
<div class="sb" style="top:142px"></div>
<div class="sb" style="top:191px"></div>
<div class="sb" style="top:240px"></div>
<div class="sb" style="top:289px"></div>
<div class="sb" style="top:493px"></div>
<svg class="a" style="left:0;top:0;will-change:transform" width="792" height="581"><text transform="translate(743.5,103.8) scale(1.06,1)" font-family="Liberation Sans" font-size="8.4" font-weight="bold" fill="#8a8a8a">01110</text><text transform="translate(743.5,112.6) scale(1.06,1)" font-family="Liberation Sans" font-size="8.4" font-weight="bold" fill="#000">10011</text><text transform="translate(743.5,121.6) scale(1.06,1)" font-family="Liberation Sans" font-size="8.4" font-weight="bold" fill="#8a8a8a">00111</text><g transform="translate(755.9,158.7) rotate(0)"><circle r="11.3" fill="#fff"/><path d="M0,-11.3 A11.3,11.3 0 0 1 0,11.3 A5.65,5.65 0 0 1 0,0 A5.65,5.65 0 0 0 0,-11.3Z" fill="#4a58f0" stroke="#000" stroke-width="0.8800000000000001"/><circle r="11.3" fill="none" stroke="#000" stroke-width="1.1"/><circle cy="-5.65" r="1.9" fill="#4a58f0" stroke="#000" stroke-width="0.77"/><circle cy="5.65" r="1.9" fill="#fff" stroke="#000" stroke-width="0.77"/></g><g shape-rendering="crispEdges" fill="#222"><rect x="745" y="201" width="1" height="18"/><rect x="745" y="218" width="23" height="1"/><rect x="744" y="205" width="1" height="1"/><rect x="744" y="210" width="1" height="1"/><rect x="744" y="214" width="1" height="1"/><rect x="750" y="219" width="1" height="1"/><rect x="756" y="219" width="1" height="1"/><rect x="761" y="219" width="1" height="1"/><rect x="767" y="219" width="1" height="1"/></g><path d="M746,212.5 C749,206 754,203.5 767.5,202.6" fill="none" stroke="#0000ff" stroke-width="1.6"/><path d="M749.5,245V268.5M763.5,245V268.5M744,250.5H767.7M744,264.5H767.7" stroke="#222" stroke-width="1"/><path d="M749.5,250.5 H753.8 C752.5,246.5 753.5,245.5 756.6,245.5 C759.7,245.5 760.7,246.5 759.4,250.5 H763.5 V253.6 C760.2,252.3 759,253.5 759,256.5 C759,259.5 760.2,260.7 763.5,259.4 V264.5 H759.4 C760.5,261 759.5,260 756.6,260 C753.7,260 752.7,261 753.8,264.5 H749.5 V259.4 C746.2,260.7 745,259.5 745,256.5 C745,253.5 746.2,252.3 749.5,253.6 Z" fill="#4a58f0" stroke="#000" stroke-width="1"/><text transform="translate(743.8,296.8) scale(1.15,1)" font-family="Liberation Sans" font-size="5" font-weight="bold" fill="#aaa">01110</text><text transform="translate(743.8,300.90000000000003) scale(1.15,1)" font-family="Liberation Sans" font-size="5" font-weight="bold" fill="#333">10011</text><text transform="translate(743.8,305.0) scale(1.15,1)" font-family="Liberation Sans" font-size="5" font-weight="bold" fill="#b4b4b4">00111</text><path d="M749.1,313.5 L762.8,299.3" stroke="#333" stroke-width="1.1"/><g transform="translate(761.8,311.7) rotate(0)"><circle r="6.0" fill="#fff"/><path d="M0,-6.0 A6.0,6.0 0 0 1 0,6.0 A3.0,3.0 0 0 1 0,0 A3.0,3.0 0 0 0 0,-6.0Z" fill="#4a58f0" stroke="#000" stroke-width="0.5599999999999999"/><circle r="6.0" fill="none" stroke="#000" stroke-width="0.7"/><circle cy="-3.0" r="1.0" fill="#202060" stroke="#000" stroke-width="0.48999999999999994"/><circle cy="3.0" r="1.0" fill="#202060" stroke="#000" stroke-width="0.48999999999999994"/></g><defs><radialGradient id="stg" cx="0.35" cy="0.3" r="0.8"><stop offset="0" stop-color="#e84028"/><stop offset="1" stop-color="#900000"/></radialGradient></defs><circle cx="756" cy="510" r="9.4" fill="url(#stg)" stroke="#000" stroke-width="2"/><path d="M751.6,505.6 L760.4,514.4 M760.4,505.6 L751.6,514.4" stroke="#fff" stroke-width="2"/></svg>
<!-- view log -->
<svg class="a" style="left:700px;top:548px" width="24" height="24">
<rect x="5.9" y="5.9" width="14" height="14.8" rx="2.6" fill="#f6f6f4" stroke="#111" stroke-width="1.3"/>
<path d="M10 9.5H18M10 12H18M10 14.5H18M10 17H18" stroke="#c8c8c8" stroke-width="1.2"/>
<path d="M8 9.5h1M8 12h1M8 14.5h1M8 17h1" stroke="#333" stroke-width="1"/>
</svg>
<svg class="a" style="left:0;top:0;will-change:transform" width="792" height="581"><text transform="translate(32.80,17.400000000000002) scale(1.1490,1)" font-family="Liberation Sans" font-size="13.5" font-weight="bold" font-style="normal" fill="#0a1a50" opacity="0.5">dvdisaster-0.71</text><text transform="translate(32.00,16.6) scale(1.1490,1)" font-family="Liberation Sans" font-size="13.5" font-weight="bold" font-style="normal" fill="#fff">dvdisaster-0.71</text><text transform="translate(12.67,39.9) scale(0.9300,1)" font-family="Liberation Sans" font-size="13" font-weight="normal" font-style="normal" fill="#000">File</text><text transform="translate(45.20,39.9) scale(1.0000,1)" font-family="Liberation Sans" font-size="13" font-weight="normal" font-style="normal" fill="#000">Tools</text><text transform="translate(749.81,39.9) scale(1.0920,1)" font-family="Liberation Sans" font-size="13" font-weight="normal" font-style="normal" fill="#000">Help</text><text transform="translate(56.60,72.0) scale(1.0438,1)" font-family="Liberation Sans" font-size="13.2" font-weight="normal" font-style="normal" fill="#000">Optical drive 52X FW 1.02</text><text transform="translate(302.00,72.0) scale(1.1092,1)" font-family="Liberation Sans" font-size="13.2" font-weight="normal" font-style="normal" fill="#000">/var/tmp/medium.iso</text><text transform="translate(512.00,72.0) scale(1.1148,1)" font-family="Liberation Sans" font-size="13.2" font-weight="normal" font-style="normal" fill="#000">/var/tmp/medium.ecc</text><text transform="translate(10.42,106.7) scale(1.0832,1)" font-family="Liberation Sans" font-size="15.3" font-weight="normal" font-style="normal" fill="#000">Scanning medium for read errors.</text><text transform="translate(11.00,122.7) scale(1.1113,1)" font-family="Liberation Sans" font-size="13" font-weight="normal" font-style="italic" fill="#000">Medium &quot;Example disc&quot;: CD-R mode 1, 352486 sectors, created 25-07-2003.</text><text transform="translate(22.71,149.8) scale(1.0944,1)" font-family="Liberation Sans" font-size="13" font-weight="normal" font-style="normal" fill="#0000ff">Speed</text><text transform="translate(534.17,149.6) scale(1.1286,1)" font-family="Liberation Sans" font-size="13" font-weight="normal" font-style="normal" fill="#0000ff">Medium state</text><text transform="translate(14.90,441.0) scale(1.0630,1)" font-family="Liberation Sans" font-size="13" font-weight="normal" font-style="normal" fill="#ff00ff">C2 errors</text><text transform="translate(544.60,452.8) scale(1.1000,1)" font-family="Liberation Sans" font-size="13" font-weight="normal" font-style="normal" fill="#000">Successfully read</text><text transform="translate(544.59,478.0) scale(1.1058,1)" font-family="Liberation Sans" font-size="13" font-weight="normal" font-style="normal" fill="#000">Unreadable / skipped</text><text transform="translate(10.40,541.9) scale(1.1038,1)" font-family="Liberation Sans" font-size="13" font-weight="normal" font-style="normal" fill="#000">Scanning finished: 28752 unreadable sectors.</text><text transform="translate(740.80,133.5) scale(1.0000,1)" font-family="Liberation Sans" font-size="13" font-weight="normal" font-style="normal" fill="#000">Read</text><text transform="translate(735.90,182.6) scale(1.0564,1)" font-family="Liberation Sans" font-size="13" font-weight="normal" font-style="normal" fill="#000">Create</text><text transform="translate(739.72,231.5) scale(1.0821,1)" font-family="Liberation Sans" font-size="13" font-weight="normal" font-style="normal" fill="#000">Scan</text><text transform="translate(747.75,280.6) scale(0.9500,1)" font-family="Liberation Sans" font-size="13" font-weight="normal" font-style="normal" fill="#000">Fix</text><text transform="translate(739.00,329.5) scale(1.0515,1)" font-family="Liberation Sans" font-size="13" font-weight="normal" font-style="normal" fill="#000">Verify</text><text transform="translate(740.66,533.7) scale(1.1360,1)" font-family="Liberation Sans" font-size="13" font-weight="normal" font-style="normal" fill="#000">Stop</text><text transform="translate(724.10,565.0) scale(1.0625,1)" font-family="Liberation Sans" font-size="13" font-weight="normal" font-style="normal" fill="#000">View log</text><text transform="translate(19.60,423.5) scale(1.1077,1)" font-family="Liberation Sans" font-size="12.5" font-weight="normal" font-style="normal" fill="#0000ff">0x</text><text transform="translate(10.63,372.6) scale(1.1684,1)" font-family="Liberation Sans" font-size="12.5" font-weight="normal" font-style="normal" fill="#0000ff">10x</text><text transform="translate(11.80,322.6) scale(1.1100,1)" font-family="Liberation Sans" font-size="12.5" font-weight="normal" font-style="normal" fill="#0000ff">20x</text><text transform="translate(10.63,272.6) scale(1.1684,1)" font-family="Liberation Sans" font-size="12.5" font-weight="normal" font-style="normal" fill="#0000ff">30x</text><text transform="translate(11.80,222.6) scale(1.1100,1)" font-family="Liberation Sans" font-size="12.5" font-weight="normal" font-style="normal" fill="#0000ff">40x</text><text transform="translate(10.63,172.6) scale(1.1684,1)" font-family="Liberation Sans" font-size="12.5" font-weight="normal" font-style="normal" fill="#0000ff">50x</text><text transform="translate(10.90,465.5) scale(1.0619,1)" font-family="Liberation Sans" font-size="12.5" font-weight="normal" font-style="normal" fill="#ff00ff">400</text><text transform="translate(10.21,475.5) scale(1.0950,1)" font-family="Liberation Sans" font-size="12.5" font-weight="normal" font-style="normal" fill="#ff00ff">100</text><text transform="translate(18.70,485.5) scale(1.0357,1)" font-family="Liberation Sans" font-size="12.5" font-weight="normal" font-style="normal" fill="#ff00ff">25</text><text transform="translate(27.00,496.5) scale(0.8857,1)" font-family="Liberation Sans" font-size="12.5" font-weight="normal" font-style="normal" fill="#ff00ff">6</text><text transform="translate(34.90,525.2) scale(1.0176,1)" font-family="Liberation Sans" font-size="12.5" font-weight="normal" font-style="normal" fill="#000">0M</text><text transform="translate(94.15,525.2) scale(1.1483,1)" font-family="Liberation Sans" font-size="12.5" font-weight="normal" font-style="normal" fill="#000">100M</text><text transform="translate(162.50,525.2) scale(1.1500,1)" font-family="Liberation Sans" font-size="12.5" font-weight="normal" font-style="normal" fill="#000">200M</text><text transform="translate(229.21,525.2) scale(1.1931,1)" font-family="Liberation Sans" font-size="12.5" font-weight="normal" font-style="normal" fill="#000">300M</text><text transform="translate(299.00,525.2) scale(1.1567,1)" font-family="Liberation Sans" font-size="12.5" font-weight="normal" font-style="normal" fill="#000">400M</text><text transform="translate(366.31,525.2) scale(1.1897,1)" font-family="Liberation Sans" font-size="12.5" font-weight="normal" font-style="normal" fill="#000">500M</text><text transform="translate(436.00,525.2) scale(1.1600,1)" font-family="Liberation Sans" font-size="12.5" font-weight="normal" font-style="normal" fill="#000">600M</text></svg></body></html>
